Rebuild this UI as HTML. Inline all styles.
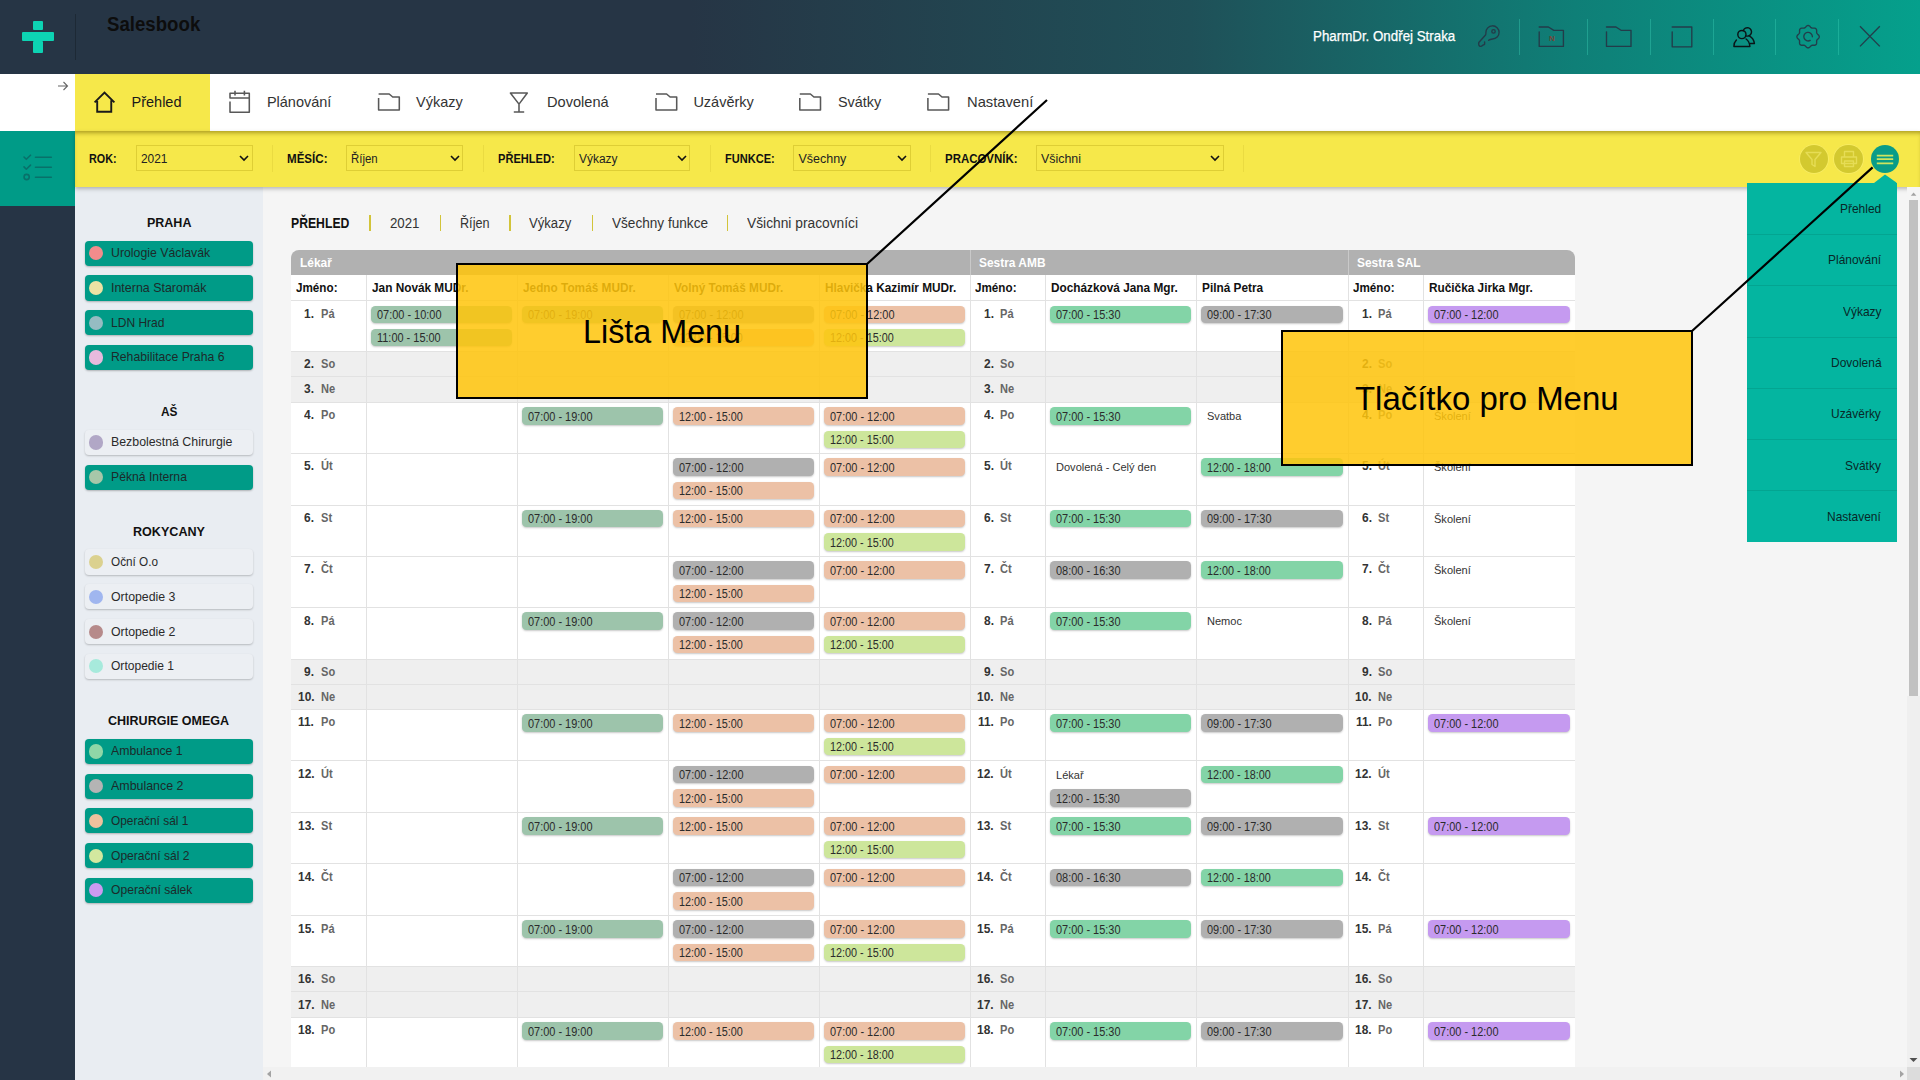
<!DOCTYPE html>
<html><head><meta charset="utf-8"><title>Salesbook</title>
<style>
html,body{margin:0;padding:0;}
body{width:1920px;height:1080px;overflow:hidden;position:relative;background:#f5f5f5;font-family:"Liberation Sans",sans-serif;}
div{box-sizing:border-box;}
svg{position:absolute;overflow:visible;}
</style></head><body>

<div style="position:absolute;left:262.5px;top:187px;width:1657.5px;height:893px;background:#f5f5f5;"></div>
<div style="position:absolute;left:0px;top:0px;width:1920px;height:74px;background:linear-gradient(90deg,#263545 0%,#263545 36%,#1f5058 62%,#0f7f77 82%,#05a08c 100%);"></div>
<div style="position:absolute;left:32.75px;top:20.6px;width:10px;height:9.4px;background:#0dd3b3;border-radius:1px;"></div>
<div style="position:absolute;left:21.9px;top:31.9px;width:31.85px;height:9.35px;background:#0dd3b3;border-radius:1px;"></div>
<div style="position:absolute;left:32.75px;top:41.0px;width:10px;height:11.5px;background:#0dd3b3;border-radius:1px;"></div>
<div style="position:absolute;left:75px;top:14px;width:1px;height:46px;background:rgba(0,0,0,0.22);"></div>
<div style="position:absolute;left:106.75px;top:14.37px;font-size:20px;line-height:20px;color:#0d0d0d;white-space:nowrap;font-weight:bold;transform:scaleX(0.9321);transform-origin:0 0;">Salesbook</div>
<div style="position:absolute;left:1313.00px;top:29.05px;font-size:14px;line-height:14px;color:#ffffff;white-space:nowrap;transform:scaleX(0.9522);transform-origin:0 0;-webkit-text-stroke:0.25px #fff;">PharmDr. Ondřej Straka</div>
<div style="position:absolute;left:1519px;top:19px;width:1.2px;height:36px;background:rgba(60,210,185,0.38);"></div>
<div style="position:absolute;left:1587px;top:19px;width:1.2px;height:36px;background:rgba(60,210,185,0.38);"></div>
<div style="position:absolute;left:1650px;top:19px;width:1.2px;height:36px;background:rgba(60,210,185,0.38);"></div>
<div style="position:absolute;left:1713px;top:19px;width:1.2px;height:36px;background:rgba(60,210,185,0.38);"></div>
<div style="position:absolute;left:1775px;top:19px;width:1.2px;height:36px;background:rgba(60,210,185,0.38);"></div>
<div style="position:absolute;left:1838px;top:19px;width:1.2px;height:36px;background:rgba(60,210,185,0.38);"></div>
<svg style="left:0;top:0" width="1920" height="74" viewBox="0 0 1920 74">
<g fill="none" stroke="#263545" stroke-width="1.35" stroke-linecap="round" stroke-linejoin="round" opacity="0.9">
<path d="M1488.6 40.3 Q1490 39.2 1492.5 39 A6.6 6.6 0 1 0 1485.9 32.6 Q1486 34.3 1485.5 35 L1478.8 42.5 Q1478.2 45.5 1480 46.3 Q1481.5 46.8 1482.5 45.3 L1484.6 44.3 L1484.6 42"/>
<circle cx="1493.5" cy="31.4" r="1.7"/>
<path d="M1539.2 31.8 L1539.2 46.4 L1563.4 46.4 L1563.4 30.3 L1553.8 30.3 L1548.4 27 L1539.2 27"/>
<path d="M1606.5 31.8 L1606.5 46.4 L1631 46.4 L1631 30.3 L1621 30.3 L1616 27 L1606.5 27"/>
<path d="M1672.2 31.8 L1672.2 46.8 L1691.8 46.8 L1691.8 27 L1672.2 27"/>
<path d="M1808.10 25.50 L1808.82 25.64 L1809.50 26.04 L1810.11 26.60 L1810.65 27.19 L1811.16 27.68 L1811.70 28.02 L1812.31 28.16 L1813.02 28.17 L1813.82 28.14 L1814.64 28.17 L1815.41 28.37 L1816.02 28.78 L1816.43 29.39 L1816.63 30.16 L1816.66 30.98 L1816.63 31.78 L1816.64 32.49 L1816.78 33.10 L1817.12 33.64 L1817.61 34.15 L1818.20 34.69 L1818.76 35.30 L1819.16 35.98 L1819.30 36.70 L1819.16 37.42 L1818.76 38.10 L1818.20 38.71 L1817.61 39.25 L1817.12 39.76 L1816.78 40.30 L1816.64 40.91 L1816.63 41.62 L1816.66 42.42 L1816.63 43.24 L1816.43 44.01 L1816.02 44.62 L1815.41 45.03 L1814.64 45.23 L1813.82 45.26 L1813.02 45.23 L1812.31 45.24 L1811.70 45.38 L1811.16 45.72 L1810.65 46.21 L1810.11 46.80 L1809.50 47.36 L1808.82 47.76 L1808.10 47.90 L1807.38 47.76 L1806.70 47.36 L1806.09 46.80 L1805.55 46.21 L1805.04 45.72 L1804.50 45.38 L1803.89 45.24 L1803.17 45.23 L1802.38 45.26 L1801.56 45.23 L1800.79 45.03 L1800.18 44.62 L1799.77 44.01 L1799.57 43.24 L1799.54 42.42 L1799.57 41.63 L1799.56 40.91 L1799.42 40.30 L1799.08 39.76 L1798.59 39.25 L1798.00 38.71 L1797.44 38.10 L1797.04 37.42 L1796.90 36.70 L1797.04 35.98 L1797.44 35.30 L1798.00 34.69 L1798.59 34.15 L1799.08 33.64 L1799.42 33.10 L1799.56 32.49 L1799.57 31.78 L1799.54 30.98 L1799.57 30.16 L1799.77 29.39 L1800.18 28.78 L1800.79 28.37 L1801.56 28.17 L1802.38 28.14 L1803.17 28.17 L1803.89 28.16 L1804.50 28.02 L1805.04 27.68 L1805.55 27.19 L1806.09 26.60 L1806.70 26.04 L1807.38 25.64 L1808.10 25.50 Z"/>
<path d="M1812.4 36.7 A4.3 4.3 0 1 0 1810.2 40.4"/>
<path d="M1860 26.2 L1879.8 46.4 M1879.8 26.2 L1860 46.4" stroke-linecap="butt"/>
</g>
<text x="1551.8" y="41.1" font-family="Liberation Sans" font-size="8" font-weight="bold" fill="#8a3b2c" text-anchor="middle" opacity="0.85">N</text>
<g fill="none" stroke="#0a1518" stroke-width="1.45" stroke-linecap="round" stroke-linejoin="round">
<circle cx="1741.9" cy="34.5" r="4.1"/>
<path d="M1743.3 30.65 A4.2 4.2 0 1 1 1745.78 35.81"/>
<path d="M1736.4 40.1 Q1733.6 43 1733.9 46.5 L1749.9 46.5 C1749.6 43 1748.3 40.5 1746.1 39"/>
<path d="M1749.6 36.1 Q1753.8 38.5 1754.4 43.5 L1750.5 43.5"/>
</g></svg>
<div style="position:absolute;left:0px;top:74px;width:1920px;height:56.5px;background:#ffffff;"></div>
<div style="position:absolute;left:75px;top:74px;width:135px;height:56.5px;background:#f6e84a;"></div>
<svg style="left:57px;top:80px" width="12" height="12" viewBox="0 0 12 12">
<path d="M1 6 L10.5 6 M6.5 2 L10.5 6 L6.5 10" fill="none" stroke="#666" stroke-width="1.1"/></svg>
<svg style="left:0;top:74px" width="1100" height="57" viewBox="0 74 1100 57">
<path d="M94.6 102.4 L104.5 92.5 L114.4 102.4 M97.2 101 L97.2 111.8 L111.25 111.8 L111.25 100.3" fill="none" stroke="#1a1a1a" stroke-width="1.9" stroke-linejoin="miter" stroke-linecap="butt"/>
<g fill="none" stroke="#585858" stroke-width="1.55" stroke-linejoin="round">
<path d="M230 101.5 L230 112.3 L249.3 112.3 L249.3 93.2 L230 93.2 L230 98 L249.3 98 M235 90.8 L235 95.5 M244.4 90.8 L244.4 95.5"/>
<path d="M378.6 98 L378.6 110 L399.3 110 L399.3 97 L392.70000000000005 97 L389.20000000000005 94 L378.6 94"/>
<path d="M510.4 93 L527.3 93 L519 104.1 Z M519 104.1 L519 112 M513.8 112 L524.2 112"/>
<path d="M656 98 L656 110 L676.7 110 L676.7 97 L670.1 97 L666.6 94 L656 94"/>
<path d="M799.8 98 L799.8 110 L820.5 110 L820.5 97 L813.9 97 L810.4 94 L799.8 94"/>
<path d="M927.9 98 L927.9 110 L948.6 110 L948.6 97 L942.0 97 L938.5 94 L927.9 94"/>
</g></svg>
<div style="position:absolute;left:131.50px;top:95.23px;font-size:14.5px;line-height:14.5px;color:#1a1a1a;white-space:nowrap;">Přehled</div>
<div style="position:absolute;left:266.90px;top:95.23px;font-size:14.5px;line-height:14.5px;color:#333;white-space:nowrap;">Plánování</div>
<div style="position:absolute;left:416.00px;top:95.23px;font-size:14.5px;line-height:14.5px;color:#333;white-space:nowrap;">Výkazy</div>
<div style="position:absolute;left:547.00px;top:95.23px;font-size:14.5px;line-height:14.5px;color:#333;white-space:nowrap;transform:scaleX(1.0060);transform-origin:0 0;">Dovolená</div>
<div style="position:absolute;left:693.40px;top:95.23px;font-size:14.5px;line-height:14.5px;color:#333;white-space:nowrap;">Uzávěrky</div>
<div style="position:absolute;left:838.40px;top:95.23px;font-size:14.5px;line-height:14.5px;color:#333;white-space:nowrap;transform:scaleX(0.9931);transform-origin:0 0;">Svátky</div>
<div style="position:absolute;left:966.60px;top:95.23px;font-size:14.5px;line-height:14.5px;color:#333;white-space:nowrap;transform:scaleX(1.0165);transform-origin:0 0;">Nastavení</div>
<div style="position:absolute;left:0px;top:130.5px;width:75px;height:75.1px;background:#009b87;"></div>
<svg style="left:0;top:130px" width="75" height="76" viewBox="0 130 75 76">
<g fill="none" stroke="#08716a" stroke-width="1.6" stroke-linecap="round" stroke-linejoin="round">
<path d="M24 157 L26.3 159.3 L30.5 155.2 M24 166.9 L26.3 169.2 L30.5 165.1"/><circle cx="26.65" cy="177" r="2.6"/>
<path d="M35.5 157.3 L51.3 157.3 M35.5 167.2 L51.3 167.2 M35.5 177.2 L51.3 177.2"/></g></svg>
<div style="position:absolute;left:0px;top:205.6px;width:75px;height:874.4px;background:#263445;"></div>
<div style="position:absolute;left:75px;top:187px;width:187.5px;height:893px;background:#e9edf2;"></div>
<div style="position:absolute;left:75px;top:130.5px;width:1845px;height:56.5px;background:#f6e84a;box-shadow:0 2px 4px rgba(0,0,0,0.25), inset 0 4px 4px -2px rgba(110,95,0,0.55);"></div>
<div style="position:absolute;left:89.25px;top:153.02px;font-size:12.5px;line-height:12.5px;color:#111;white-space:nowrap;font-weight:bold;transform:scaleX(0.8611);transform-origin:0 0;">ROK:</div>
<div style="position:absolute;left:135.7px;top:145.3px;width:117px;height:25.3px;border:1px solid rgba(160,140,0,0.28);"></div>
<div style="position:absolute;left:140.70px;top:152.82px;font-size:12.5px;line-height:12.5px;color:#222;white-space:nowrap;transform:scaleX(0.9528);transform-origin:0 0;">2021</div>
<svg style="left:239.2px;top:155px" width="10" height="6" viewBox="0 0 10 6">
<path d="M1 1 L5 5 L9 1" fill="none" stroke="#111" stroke-width="1.6"/></svg>
<div style="position:absolute;left:272.2px;top:145px;width:1px;height:27px;background:rgba(150,130,0,0.12);"></div>
<div style="position:absolute;left:287.00px;top:153.02px;font-size:12.5px;line-height:12.5px;color:#111;white-space:nowrap;font-weight:bold;transform:scaleX(0.9257);transform-origin:0 0;">MĚSÍC:</div>
<div style="position:absolute;left:346.25px;top:145.3px;width:117px;height:25.3px;border:1px solid rgba(160,140,0,0.28);"></div>
<div style="position:absolute;left:351.25px;top:152.82px;font-size:12.5px;line-height:12.5px;color:#222;white-space:nowrap;transform:scaleX(0.9113);transform-origin:0 0;">Říjen</div>
<svg style="left:449.75px;top:155px" width="10" height="6" viewBox="0 0 10 6">
<path d="M1 1 L5 5 L9 1" fill="none" stroke="#111" stroke-width="1.6"/></svg>
<div style="position:absolute;left:483px;top:145px;width:1px;height:27px;background:rgba(150,130,0,0.12);"></div>
<div style="position:absolute;left:497.80px;top:153.02px;font-size:12.5px;line-height:12.5px;color:#111;white-space:nowrap;font-weight:bold;transform:scaleX(0.8861);transform-origin:0 0;">PŘEHLED:</div>
<div style="position:absolute;left:573.75px;top:145.3px;width:116.5px;height:25.3px;border:1px solid rgba(160,140,0,0.28);"></div>
<div style="position:absolute;left:578.75px;top:152.82px;font-size:12.5px;line-height:12.5px;color:#222;white-space:nowrap;transform:scaleX(0.9550);transform-origin:0 0;">Výkazy</div>
<svg style="left:676.75px;top:155px" width="10" height="6" viewBox="0 0 10 6">
<path d="M1 1 L5 5 L9 1" fill="none" stroke="#111" stroke-width="1.6"/></svg>
<div style="position:absolute;left:709.7px;top:145px;width:1px;height:27px;background:rgba(150,130,0,0.12);"></div>
<div style="position:absolute;left:724.70px;top:153.02px;font-size:12.5px;line-height:12.5px;color:#111;white-space:nowrap;font-weight:bold;transform:scaleX(0.8836);transform-origin:0 0;">FUNKCE:</div>
<div style="position:absolute;left:793.4px;top:145.3px;width:117.2px;height:25.3px;border:1px solid rgba(160,140,0,0.28);"></div>
<div style="position:absolute;left:798.40px;top:152.82px;font-size:12.5px;line-height:12.5px;color:#222;white-space:nowrap;">Všechny</div>
<svg style="left:897.1px;top:155px" width="10" height="6" viewBox="0 0 10 6">
<path d="M1 1 L5 5 L9 1" fill="none" stroke="#111" stroke-width="1.6"/></svg>
<div style="position:absolute;left:930px;top:145px;width:1px;height:27px;background:rgba(150,130,0,0.12);"></div>
<div style="position:absolute;left:944.70px;top:153.02px;font-size:12.5px;line-height:12.5px;color:#111;white-space:nowrap;font-weight:bold;transform:scaleX(0.9155);transform-origin:0 0;">PRACOVNÍK:</div>
<div style="position:absolute;left:1036.25px;top:145.3px;width:187.3px;height:25.3px;border:1px solid rgba(160,140,0,0.28);"></div>
<div style="position:absolute;left:1041.25px;top:152.82px;font-size:12.5px;line-height:12.5px;color:#222;white-space:nowrap;transform:scaleX(0.9922);transform-origin:0 0;">Všichni</div>
<svg style="left:1210.05px;top:155px" width="10" height="6" viewBox="0 0 10 6">
<path d="M1 1 L5 5 L9 1" fill="none" stroke="#111" stroke-width="1.6"/></svg>
<div style="position:absolute;left:1242.7px;top:145px;width:1px;height:27px;background:rgba(150,130,0,0.12);"></div>
<div style="position:absolute;left:1799.5px;top:145px;width:28.2px;height:28.2px;border-radius:50%;background:#d3c92f;box-shadow:0 0 0 0.8px rgba(250,240,120,0.6);"></div>
<svg style="left:1804px;top:150px" width="19" height="19" viewBox="0 0 19 19">
<path d="M2 2.5 L17 2.5 L11 9.5 L11 16.5 L8 14.5 L8 9.5 Z" fill="none" stroke="#e6dd55" stroke-width="1.4" stroke-linejoin="round"/></svg>
<div style="position:absolute;left:1834.4px;top:145px;width:28.2px;height:28.2px;border-radius:50%;background:#d3c92f;box-shadow:0 0 0 0.8px rgba(250,240,120,0.6);"></div>
<svg style="left:1838.5px;top:149px" width="20" height="20" viewBox="0 0 20 20">
<g fill="none" stroke="#e6dd55" stroke-width="1.4" stroke-linejoin="round">
<path d="M5.5 8 L5.5 2.5 L14.5 2.5 L14.5 8 M2.5 8 L17.5 8 L17.5 14.5 L2.5 14.5 Z M5.5 12 L14.5 12 L14.5 17.5 L5.5 17.5 Z"/></g></svg>
<div style="position:absolute;left:1870.5px;top:145px;width:28.2px;height:28.2px;border-radius:50%;background:#099c88;"></div>
<svg style="left:1876px;top:153px" width="18" height="12" viewBox="0 0 18 12">
<path d="M0.8 2.7 L17.2 2.7 M0.8 6.2 L17.2 6.2 M0.8 10.3 L17.2 10.3" fill="none" stroke="#cfe45e" stroke-width="1.7"/></svg>
<div style="position:absolute;left:146.55px;top:216.30px;font-size:13px;line-height:13px;color:#111;white-space:nowrap;font-weight:bold;transform:scaleX(0.9607);transform-origin:0 0;">PRAHA</div>
<div style="position:absolute;left:85px;top:240.7px;width:168.3px;height:25.3px;background:#009b87;border-radius:4px;box-shadow:0 1px 2px rgba(0,0,0,0.25);"></div>
<div style="position:absolute;left:89px;top:246.29999999999998px;width:14.2px;height:14.2px;background:#f28c8c;border-radius:50%;"></div>
<div style="position:absolute;left:110.50px;top:247.33px;font-size:12.6px;line-height:12.6px;color:#1c2a2a;white-space:nowrap;transform:scaleX(0.9772);transform-origin:0 0;">Urologie Václavák</div>
<div style="position:absolute;left:85px;top:275.4px;width:168.3px;height:25.3px;background:#009b87;border-radius:4px;box-shadow:0 1px 2px rgba(0,0,0,0.25);"></div>
<div style="position:absolute;left:89px;top:281.0px;width:14.2px;height:14.2px;background:#ede2a4;border-radius:50%;"></div>
<div style="position:absolute;left:110.50px;top:282.03px;font-size:12.6px;line-height:12.6px;color:#1c2a2a;white-space:nowrap;transform:scaleX(0.9875);transform-origin:0 0;">Interna Staromák</div>
<div style="position:absolute;left:85px;top:310.1px;width:168.3px;height:25.3px;background:#009b87;border-radius:4px;box-shadow:0 1px 2px rgba(0,0,0,0.25);"></div>
<div style="position:absolute;left:89px;top:315.70000000000005px;width:14.2px;height:14.2px;background:#95bcc2;border-radius:50%;"></div>
<div style="position:absolute;left:110.50px;top:316.73px;font-size:12.6px;line-height:12.6px;color:#1c2a2a;white-space:nowrap;transform:scaleX(0.9552);transform-origin:0 0;">LDN Hrad</div>
<div style="position:absolute;left:85px;top:344.8px;width:168.3px;height:25.3px;background:#009b87;border-radius:4px;box-shadow:0 1px 2px rgba(0,0,0,0.25);"></div>
<div style="position:absolute;left:89px;top:350.40000000000003px;width:14.2px;height:14.2px;background:#e7badd;border-radius:50%;"></div>
<div style="position:absolute;left:110.50px;top:351.43px;font-size:12.6px;line-height:12.6px;color:#1c2a2a;white-space:nowrap;transform:scaleX(0.9702);transform-origin:0 0;">Rehabilitace Praha 6</div>
<div style="position:absolute;left:160.50px;top:404.80px;font-size:13px;line-height:13px;color:#111;white-space:nowrap;font-weight:bold;transform:scaleX(0.9131);transform-origin:0 0;">AŠ</div>
<div style="position:absolute;left:85px;top:429.8px;width:168.3px;height:25.3px;background:#eceff3;border-radius:4px;box-shadow:0 1px 2px rgba(0,0,0,0.22);"></div>
<div style="position:absolute;left:89px;top:435.40000000000003px;width:14.2px;height:14.2px;background:#b1a7c6;border-radius:50%;"></div>
<div style="position:absolute;left:110.50px;top:436.43px;font-size:12.6px;line-height:12.6px;color:#2a2a2a;white-space:nowrap;transform:scaleX(0.9800);transform-origin:0 0;">Bezbolestná Chirurgie</div>
<div style="position:absolute;left:85px;top:464.6px;width:168.3px;height:25.3px;background:#009b87;border-radius:4px;box-shadow:0 1px 2px rgba(0,0,0,0.25);"></div>
<div style="position:absolute;left:89px;top:470.20000000000005px;width:14.2px;height:14.2px;background:#a7c7a9;border-radius:50%;"></div>
<div style="position:absolute;left:110.50px;top:471.23px;font-size:12.6px;line-height:12.6px;color:#1c2a2a;white-space:nowrap;transform:scaleX(0.9682);transform-origin:0 0;">Pěkná Interna</div>
<div style="position:absolute;left:132.75px;top:524.80px;font-size:13px;line-height:13px;color:#111;white-space:nowrap;font-weight:bold;transform:scaleX(0.9674);transform-origin:0 0;">ROKYCANY</div>
<div style="position:absolute;left:85px;top:549.4px;width:168.3px;height:25.3px;background:#eceff3;border-radius:4px;box-shadow:0 1px 2px rgba(0,0,0,0.22);"></div>
<div style="position:absolute;left:89px;top:555.0px;width:14.2px;height:14.2px;background:#dbd18f;border-radius:50%;"></div>
<div style="position:absolute;left:110.50px;top:556.03px;font-size:12.6px;line-height:12.6px;color:#2a2a2a;white-space:nowrap;transform:scaleX(0.9325);transform-origin:0 0;">Oční O.o</div>
<div style="position:absolute;left:85px;top:584.2px;width:168.3px;height:25.3px;background:#eceff3;border-radius:4px;box-shadow:0 1px 2px rgba(0,0,0,0.22);"></div>
<div style="position:absolute;left:89px;top:589.8000000000001px;width:14.2px;height:14.2px;background:#a0b6ef;border-radius:50%;"></div>
<div style="position:absolute;left:110.50px;top:590.83px;font-size:12.6px;line-height:12.6px;color:#2a2a2a;white-space:nowrap;transform:scaleX(0.9797);transform-origin:0 0;">Ortopedie 3</div>
<div style="position:absolute;left:85px;top:618.9px;width:168.3px;height:25.3px;background:#eceff3;border-radius:4px;box-shadow:0 1px 2px rgba(0,0,0,0.22);"></div>
<div style="position:absolute;left:89px;top:624.5px;width:14.2px;height:14.2px;background:#b68a8a;border-radius:50%;"></div>
<div style="position:absolute;left:110.50px;top:625.53px;font-size:12.6px;line-height:12.6px;color:#2a2a2a;white-space:nowrap;transform:scaleX(0.9797);transform-origin:0 0;">Ortopedie 2</div>
<div style="position:absolute;left:85px;top:653.6px;width:168.3px;height:25.3px;background:#eceff3;border-radius:4px;box-shadow:0 1px 2px rgba(0,0,0,0.22);"></div>
<div style="position:absolute;left:89px;top:659.2px;width:14.2px;height:14.2px;background:#a7eadc;border-radius:50%;"></div>
<div style="position:absolute;left:110.50px;top:660.23px;font-size:12.6px;line-height:12.6px;color:#2a2a2a;white-space:nowrap;transform:scaleX(0.9569);transform-origin:0 0;">Ortopedie 1</div>
<div style="position:absolute;left:108.25px;top:714.30px;font-size:13px;line-height:13px;color:#111;white-space:nowrap;font-weight:bold;transform:scaleX(0.9630);transform-origin:0 0;">CHIRURGIE OMEGA</div>
<div style="position:absolute;left:85px;top:738.8px;width:168.3px;height:25.3px;background:#009b87;border-radius:4px;box-shadow:0 1px 2px rgba(0,0,0,0.25);"></div>
<div style="position:absolute;left:89px;top:744.4px;width:14.2px;height:14.2px;background:#8fd7a7;border-radius:50%;"></div>
<div style="position:absolute;left:110.50px;top:745.43px;font-size:12.6px;line-height:12.6px;color:#1c2a2a;white-space:nowrap;transform:scaleX(0.9752);transform-origin:0 0;">Ambulance 1</div>
<div style="position:absolute;left:85px;top:773.5px;width:168.3px;height:25.3px;background:#009b87;border-radius:4px;box-shadow:0 1px 2px rgba(0,0,0,0.25);"></div>
<div style="position:absolute;left:89px;top:779.1px;width:14.2px;height:14.2px;background:#b4b4b4;border-radius:50%;"></div>
<div style="position:absolute;left:110.50px;top:780.13px;font-size:12.6px;line-height:12.6px;color:#1c2a2a;white-space:nowrap;transform:scaleX(0.9861);transform-origin:0 0;">Ambulance 2</div>
<div style="position:absolute;left:85px;top:808.2px;width:168.3px;height:25.3px;background:#009b87;border-radius:4px;box-shadow:0 1px 2px rgba(0,0,0,0.25);"></div>
<div style="position:absolute;left:89px;top:813.8000000000001px;width:14.2px;height:14.2px;background:#efc19d;border-radius:50%;"></div>
<div style="position:absolute;left:110.50px;top:814.83px;font-size:12.6px;line-height:12.6px;color:#1c2a2a;white-space:nowrap;transform:scaleX(0.9443);transform-origin:0 0;">Operační sál 1</div>
<div style="position:absolute;left:85px;top:842.9px;width:168.3px;height:25.3px;background:#009b87;border-radius:4px;box-shadow:0 1px 2px rgba(0,0,0,0.25);"></div>
<div style="position:absolute;left:89px;top:848.5px;width:14.2px;height:14.2px;background:#d3e89f;border-radius:50%;"></div>
<div style="position:absolute;left:110.50px;top:849.53px;font-size:12.6px;line-height:12.6px;color:#1c2a2a;white-space:nowrap;transform:scaleX(0.9590);transform-origin:0 0;">Operační sál 2</div>
<div style="position:absolute;left:85px;top:877.6px;width:168.3px;height:25.3px;background:#009b87;border-radius:4px;box-shadow:0 1px 2px rgba(0,0,0,0.25);"></div>
<div style="position:absolute;left:89px;top:883.2px;width:14.2px;height:14.2px;background:#cb9af0;border-radius:50%;"></div>
<div style="position:absolute;left:110.50px;top:884.23px;font-size:12.6px;line-height:12.6px;color:#1c2a2a;white-space:nowrap;transform:scaleX(0.9611);transform-origin:0 0;">Operační sálek</div>
<div style="position:absolute;left:290.60px;top:215.65px;font-size:14px;line-height:14px;color:#111;white-space:nowrap;font-weight:bold;transform:scaleX(0.8727);transform-origin:0 0;">PŘEHLED</div>
<div style="position:absolute;left:369.4px;top:214.6px;width:1.6px;height:16px;background:#d2c43a;"></div>
<div style="position:absolute;left:439.8px;top:214.6px;width:1.6px;height:16px;background:#d2c43a;"></div>
<div style="position:absolute;left:509.0px;top:214.6px;width:1.6px;height:16px;background:#d2c43a;"></div>
<div style="position:absolute;left:591.5px;top:214.6px;width:1.6px;height:16px;background:#d2c43a;"></div>
<div style="position:absolute;left:726.7px;top:214.6px;width:1.6px;height:16px;background:#d2c43a;"></div>
<div style="position:absolute;left:389.70px;top:215.65px;font-size:14px;line-height:14px;color:#333;white-space:nowrap;transform:scaleX(0.9470);transform-origin:0 0;">2021</div>
<div style="position:absolute;left:459.60px;top:215.65px;font-size:14px;line-height:14px;color:#333;white-space:nowrap;transform:scaleX(0.9024);transform-origin:0 0;">Říjen</div>
<div style="position:absolute;left:529.30px;top:215.65px;font-size:14px;line-height:14px;color:#333;white-space:nowrap;transform:scaleX(0.9369);transform-origin:0 0;">Výkazy</div>
<div style="position:absolute;left:611.60px;top:215.65px;font-size:14px;line-height:14px;color:#333;white-space:nowrap;transform:scaleX(0.9713);transform-origin:0 0;">Všechny funkce</div>
<div style="position:absolute;left:747.00px;top:215.65px;font-size:14px;line-height:14px;color:#333;white-space:nowrap;transform:scaleX(0.9837);transform-origin:0 0;">Všichni pracovníci</div>
<div style="position:absolute;left:291.0px;top:274.8px;width:1283.5px;height:792.2px;background:#ffffff;"></div>
<div style="position:absolute;left:291.0px;top:351.6px;width:1283.5px;height:25.299999999999955px;background:#efefef;"></div>
<div style="position:absolute;left:291.0px;top:376.9px;width:1283.5px;height:26.0px;background:#efefef;"></div>
<div style="position:absolute;left:291.0px;top:659.6px;width:1283.5px;height:25.299999999999955px;background:#efefef;"></div>
<div style="position:absolute;left:291.0px;top:684.9px;width:1283.5px;height:25.0px;background:#efefef;"></div>
<div style="position:absolute;left:291.0px;top:966.6px;width:1283.5px;height:25.799999999999955px;background:#efefef;"></div>
<div style="position:absolute;left:291.0px;top:992.4px;width:1283.5px;height:25.5px;background:#efefef;"></div>
<div style="position:absolute;left:291.0px;top:250.0px;width:1283.5px;height:24.80000000000001px;background:#b1b1b1;border-radius:8px 8px 0 0;"></div>
<div style="position:absolute;left:300.30px;top:256.59px;font-size:12.3px;line-height:12.3px;color:#ffffff;white-space:nowrap;font-weight:bold;transform:scaleX(0.9700);transform-origin:0 0;">Lékař</div>
<div style="position:absolute;left:979.30px;top:256.59px;font-size:12.3px;line-height:12.3px;color:#ffffff;white-space:nowrap;font-weight:bold;transform:scaleX(0.9700);transform-origin:0 0;">Sestra AMB</div>
<div style="position:absolute;left:970.0px;top:250.0px;width:1px;height:24.80000000000001px;background:#c9c9c9;"></div>
<div style="position:absolute;left:1357.30px;top:256.59px;font-size:12.3px;line-height:12.3px;color:#ffffff;white-space:nowrap;font-weight:bold;transform:scaleX(0.9700);transform-origin:0 0;">Sestra SAL</div>
<div style="position:absolute;left:1348.0px;top:250.0px;width:1px;height:24.80000000000001px;background:#c9c9c9;"></div>
<div style="position:absolute;left:291.0px;top:300.1px;width:1283.5px;height:1px;background:#e2e2e2;"></div>
<div style="position:absolute;left:291.0px;top:350.6px;width:1283.5px;height:1px;background:#e2e2e2;"></div>
<div style="position:absolute;left:291.0px;top:375.9px;width:1283.5px;height:1px;background:#e2e2e2;"></div>
<div style="position:absolute;left:291.0px;top:401.9px;width:1283.5px;height:1px;background:#e2e2e2;"></div>
<div style="position:absolute;left:291.0px;top:452.8px;width:1283.5px;height:1px;background:#e2e2e2;"></div>
<div style="position:absolute;left:291.0px;top:504.5px;width:1283.5px;height:1px;background:#e2e2e2;"></div>
<div style="position:absolute;left:291.0px;top:555.7px;width:1283.5px;height:1px;background:#e2e2e2;"></div>
<div style="position:absolute;left:291.0px;top:607.0px;width:1283.5px;height:1px;background:#e2e2e2;"></div>
<div style="position:absolute;left:291.0px;top:658.6px;width:1283.5px;height:1px;background:#e2e2e2;"></div>
<div style="position:absolute;left:291.0px;top:683.9px;width:1283.5px;height:1px;background:#e2e2e2;"></div>
<div style="position:absolute;left:291.0px;top:708.9px;width:1283.5px;height:1px;background:#e2e2e2;"></div>
<div style="position:absolute;left:291.0px;top:760.3px;width:1283.5px;height:1px;background:#e2e2e2;"></div>
<div style="position:absolute;left:291.0px;top:812.0px;width:1283.5px;height:1px;background:#e2e2e2;"></div>
<div style="position:absolute;left:291.0px;top:863.2px;width:1283.5px;height:1px;background:#e2e2e2;"></div>
<div style="position:absolute;left:291.0px;top:915.0px;width:1283.5px;height:1px;background:#e2e2e2;"></div>
<div style="position:absolute;left:291.0px;top:965.6px;width:1283.5px;height:1px;background:#e2e2e2;"></div>
<div style="position:absolute;left:291.0px;top:991.4px;width:1283.5px;height:1px;background:#e2e2e2;"></div>
<div style="position:absolute;left:291.0px;top:1016.9px;width:1283.5px;height:1px;background:#e2e2e2;"></div>
<div style="position:absolute;left:366px;top:274.8px;width:1px;height:792.2px;background:#e2e2e2;"></div>
<div style="position:absolute;left:517px;top:274.8px;width:1px;height:792.2px;background:#e2e2e2;"></div>
<div style="position:absolute;left:668px;top:274.8px;width:1px;height:792.2px;background:#e2e2e2;"></div>
<div style="position:absolute;left:819px;top:274.8px;width:1px;height:792.2px;background:#e2e2e2;"></div>
<div style="position:absolute;left:970px;top:274.8px;width:1px;height:792.2px;background:#e2e2e2;"></div>
<div style="position:absolute;left:1045px;top:274.8px;width:1px;height:792.2px;background:#e2e2e2;"></div>
<div style="position:absolute;left:1196px;top:274.8px;width:1px;height:792.2px;background:#e2e2e2;"></div>
<div style="position:absolute;left:1348px;top:274.8px;width:1px;height:792.2px;background:#e2e2e2;"></div>
<div style="position:absolute;left:1423px;top:274.8px;width:1px;height:792.2px;background:#e2e2e2;"></div>
<div style="position:absolute;left:295.60px;top:282.22px;font-size:12.5px;line-height:12.5px;color:#111;white-space:nowrap;font-weight:bold;transform:scaleX(0.9339);transform-origin:0 0;">Jméno:</div>
<div style="position:absolute;left:371.70px;top:282.22px;font-size:12.5px;line-height:12.5px;color:#111;white-space:nowrap;font-weight:bold;transform:scaleX(0.9450);transform-origin:0 0;">Jan Novák MUDr.</div>
<div style="position:absolute;left:522.70px;top:282.22px;font-size:12.5px;line-height:12.5px;color:#111;white-space:nowrap;font-weight:bold;transform:scaleX(0.9450);transform-origin:0 0;">Jedno Tomáš MUDr.</div>
<div style="position:absolute;left:673.70px;top:282.22px;font-size:12.5px;line-height:12.5px;color:#111;white-space:nowrap;font-weight:bold;transform:scaleX(0.9450);transform-origin:0 0;">Volný Tomáš MUDr.</div>
<div style="position:absolute;left:824.70px;top:282.22px;font-size:12.5px;line-height:12.5px;color:#111;white-space:nowrap;font-weight:bold;transform:scaleX(0.9450);transform-origin:0 0;">Hlavička Kazimír MUDr.</div>
<div style="position:absolute;left:975.10px;top:282.22px;font-size:12.5px;line-height:12.5px;color:#111;white-space:nowrap;font-weight:bold;transform:scaleX(0.9339);transform-origin:0 0;">Jméno:</div>
<div style="position:absolute;left:1050.70px;top:282.22px;font-size:12.5px;line-height:12.5px;color:#111;white-space:nowrap;font-weight:bold;transform:scaleX(0.9450);transform-origin:0 0;">Docházková Jana Mgr.</div>
<div style="position:absolute;left:1201.70px;top:282.22px;font-size:12.5px;line-height:12.5px;color:#111;white-space:nowrap;font-weight:bold;transform:scaleX(0.9450);transform-origin:0 0;">Pilná Petra</div>
<div style="position:absolute;left:1353.10px;top:282.22px;font-size:12.5px;line-height:12.5px;color:#111;white-space:nowrap;font-weight:bold;transform:scaleX(0.9339);transform-origin:0 0;">Jméno:</div>
<div style="position:absolute;left:1428.70px;top:282.22px;font-size:12.5px;line-height:12.5px;color:#111;white-space:nowrap;font-weight:bold;transform:scaleX(0.9450);transform-origin:0 0;">Ručička Jirka Mgr.</div>
<div style="position:absolute;left:304.14px;top:307.69px;font-size:12.3px;line-height:12.3px;color:#333;white-space:nowrap;font-weight:bold;transform:scaleX(0.9700);transform-origin:0 0;">1.</div>
<div style="position:absolute;left:320.70px;top:307.69px;font-size:12.3px;line-height:12.3px;color:#666;white-space:nowrap;font-weight:bold;transform:scaleX(0.9000);transform-origin:0 0;font-weight:600;">Pá</div>
<div style="position:absolute;left:304.14px;top:358.19px;font-size:12.3px;line-height:12.3px;color:#333;white-space:nowrap;font-weight:bold;transform:scaleX(0.9700);transform-origin:0 0;">2.</div>
<div style="position:absolute;left:320.70px;top:358.19px;font-size:12.3px;line-height:12.3px;color:#666;white-space:nowrap;font-weight:bold;transform:scaleX(0.9000);transform-origin:0 0;font-weight:600;">So</div>
<div style="position:absolute;left:304.14px;top:383.49px;font-size:12.3px;line-height:12.3px;color:#333;white-space:nowrap;font-weight:bold;transform:scaleX(0.9700);transform-origin:0 0;">3.</div>
<div style="position:absolute;left:320.70px;top:383.49px;font-size:12.3px;line-height:12.3px;color:#666;white-space:nowrap;font-weight:bold;transform:scaleX(0.9000);transform-origin:0 0;font-weight:600;">Ne</div>
<div style="position:absolute;left:304.14px;top:409.49px;font-size:12.3px;line-height:12.3px;color:#333;white-space:nowrap;font-weight:bold;transform:scaleX(0.9700);transform-origin:0 0;">4.</div>
<div style="position:absolute;left:320.70px;top:409.49px;font-size:12.3px;line-height:12.3px;color:#666;white-space:nowrap;font-weight:bold;transform:scaleX(0.9000);transform-origin:0 0;font-weight:600;">Po</div>
<div style="position:absolute;left:304.14px;top:460.39px;font-size:12.3px;line-height:12.3px;color:#333;white-space:nowrap;font-weight:bold;transform:scaleX(0.9700);transform-origin:0 0;">5.</div>
<div style="position:absolute;left:320.70px;top:460.39px;font-size:12.3px;line-height:12.3px;color:#666;white-space:nowrap;font-weight:bold;transform:scaleX(0.9000);transform-origin:0 0;font-weight:600;">Út</div>
<div style="position:absolute;left:304.14px;top:512.09px;font-size:12.3px;line-height:12.3px;color:#333;white-space:nowrap;font-weight:bold;transform:scaleX(0.9700);transform-origin:0 0;">6.</div>
<div style="position:absolute;left:320.70px;top:512.09px;font-size:12.3px;line-height:12.3px;color:#666;white-space:nowrap;font-weight:bold;transform:scaleX(0.9000);transform-origin:0 0;font-weight:600;">St</div>
<div style="position:absolute;left:304.14px;top:563.29px;font-size:12.3px;line-height:12.3px;color:#333;white-space:nowrap;font-weight:bold;transform:scaleX(0.9700);transform-origin:0 0;">7.</div>
<div style="position:absolute;left:320.70px;top:563.29px;font-size:12.3px;line-height:12.3px;color:#666;white-space:nowrap;font-weight:bold;transform:scaleX(0.9000);transform-origin:0 0;font-weight:600;">Čt</div>
<div style="position:absolute;left:304.14px;top:614.59px;font-size:12.3px;line-height:12.3px;color:#333;white-space:nowrap;font-weight:bold;transform:scaleX(0.9700);transform-origin:0 0;">8.</div>
<div style="position:absolute;left:320.70px;top:614.59px;font-size:12.3px;line-height:12.3px;color:#666;white-space:nowrap;font-weight:bold;transform:scaleX(0.9000);transform-origin:0 0;font-weight:600;">Pá</div>
<div style="position:absolute;left:304.14px;top:666.19px;font-size:12.3px;line-height:12.3px;color:#333;white-space:nowrap;font-weight:bold;transform:scaleX(0.9700);transform-origin:0 0;">9.</div>
<div style="position:absolute;left:320.70px;top:666.19px;font-size:12.3px;line-height:12.3px;color:#666;white-space:nowrap;font-weight:bold;transform:scaleX(0.9000);transform-origin:0 0;font-weight:600;">So</div>
<div style="position:absolute;left:297.52px;top:691.49px;font-size:12.3px;line-height:12.3px;color:#333;white-space:nowrap;font-weight:bold;transform:scaleX(0.9700);transform-origin:0 0;">10.</div>
<div style="position:absolute;left:320.70px;top:691.49px;font-size:12.3px;line-height:12.3px;color:#666;white-space:nowrap;font-weight:bold;transform:scaleX(0.9000);transform-origin:0 0;font-weight:600;">Ne</div>
<div style="position:absolute;left:298.17px;top:716.49px;font-size:12.3px;line-height:12.3px;color:#333;white-space:nowrap;font-weight:bold;transform:scaleX(0.9700);transform-origin:0 0;">11.</div>
<div style="position:absolute;left:320.70px;top:716.49px;font-size:12.3px;line-height:12.3px;color:#666;white-space:nowrap;font-weight:bold;transform:scaleX(0.9000);transform-origin:0 0;font-weight:600;">Po</div>
<div style="position:absolute;left:297.52px;top:767.89px;font-size:12.3px;line-height:12.3px;color:#333;white-space:nowrap;font-weight:bold;transform:scaleX(0.9700);transform-origin:0 0;">12.</div>
<div style="position:absolute;left:320.70px;top:767.89px;font-size:12.3px;line-height:12.3px;color:#666;white-space:nowrap;font-weight:bold;transform:scaleX(0.9000);transform-origin:0 0;font-weight:600;">Út</div>
<div style="position:absolute;left:297.52px;top:819.59px;font-size:12.3px;line-height:12.3px;color:#333;white-space:nowrap;font-weight:bold;transform:scaleX(0.9700);transform-origin:0 0;">13.</div>
<div style="position:absolute;left:320.70px;top:819.59px;font-size:12.3px;line-height:12.3px;color:#666;white-space:nowrap;font-weight:bold;transform:scaleX(0.9000);transform-origin:0 0;font-weight:600;">St</div>
<div style="position:absolute;left:297.52px;top:870.79px;font-size:12.3px;line-height:12.3px;color:#333;white-space:nowrap;font-weight:bold;transform:scaleX(0.9700);transform-origin:0 0;">14.</div>
<div style="position:absolute;left:320.70px;top:870.79px;font-size:12.3px;line-height:12.3px;color:#666;white-space:nowrap;font-weight:bold;transform:scaleX(0.9000);transform-origin:0 0;font-weight:600;">Čt</div>
<div style="position:absolute;left:297.52px;top:922.59px;font-size:12.3px;line-height:12.3px;color:#333;white-space:nowrap;font-weight:bold;transform:scaleX(0.9700);transform-origin:0 0;">15.</div>
<div style="position:absolute;left:320.70px;top:922.59px;font-size:12.3px;line-height:12.3px;color:#666;white-space:nowrap;font-weight:bold;transform:scaleX(0.9000);transform-origin:0 0;font-weight:600;">Pá</div>
<div style="position:absolute;left:297.52px;top:973.19px;font-size:12.3px;line-height:12.3px;color:#333;white-space:nowrap;font-weight:bold;transform:scaleX(0.9700);transform-origin:0 0;">16.</div>
<div style="position:absolute;left:320.70px;top:973.19px;font-size:12.3px;line-height:12.3px;color:#666;white-space:nowrap;font-weight:bold;transform:scaleX(0.9000);transform-origin:0 0;font-weight:600;">So</div>
<div style="position:absolute;left:297.52px;top:998.99px;font-size:12.3px;line-height:12.3px;color:#333;white-space:nowrap;font-weight:bold;transform:scaleX(0.9700);transform-origin:0 0;">17.</div>
<div style="position:absolute;left:320.70px;top:998.99px;font-size:12.3px;line-height:12.3px;color:#666;white-space:nowrap;font-weight:bold;transform:scaleX(0.9000);transform-origin:0 0;font-weight:600;">Ne</div>
<div style="position:absolute;left:297.52px;top:1024.49px;font-size:12.3px;line-height:12.3px;color:#333;white-space:nowrap;font-weight:bold;transform:scaleX(0.9700);transform-origin:0 0;">18.</div>
<div style="position:absolute;left:320.70px;top:1024.49px;font-size:12.3px;line-height:12.3px;color:#666;white-space:nowrap;font-weight:bold;transform:scaleX(0.9000);transform-origin:0 0;font-weight:600;">Po</div>
<div style="position:absolute;left:983.64px;top:307.69px;font-size:12.3px;line-height:12.3px;color:#333;white-space:nowrap;font-weight:bold;transform:scaleX(0.9700);transform-origin:0 0;">1.</div>
<div style="position:absolute;left:1000.20px;top:307.69px;font-size:12.3px;line-height:12.3px;color:#666;white-space:nowrap;font-weight:bold;transform:scaleX(0.9000);transform-origin:0 0;font-weight:600;">Pá</div>
<div style="position:absolute;left:983.64px;top:358.19px;font-size:12.3px;line-height:12.3px;color:#333;white-space:nowrap;font-weight:bold;transform:scaleX(0.9700);transform-origin:0 0;">2.</div>
<div style="position:absolute;left:1000.20px;top:358.19px;font-size:12.3px;line-height:12.3px;color:#666;white-space:nowrap;font-weight:bold;transform:scaleX(0.9000);transform-origin:0 0;font-weight:600;">So</div>
<div style="position:absolute;left:983.64px;top:383.49px;font-size:12.3px;line-height:12.3px;color:#333;white-space:nowrap;font-weight:bold;transform:scaleX(0.9700);transform-origin:0 0;">3.</div>
<div style="position:absolute;left:1000.20px;top:383.49px;font-size:12.3px;line-height:12.3px;color:#666;white-space:nowrap;font-weight:bold;transform:scaleX(0.9000);transform-origin:0 0;font-weight:600;">Ne</div>
<div style="position:absolute;left:983.64px;top:409.49px;font-size:12.3px;line-height:12.3px;color:#333;white-space:nowrap;font-weight:bold;transform:scaleX(0.9700);transform-origin:0 0;">4.</div>
<div style="position:absolute;left:1000.20px;top:409.49px;font-size:12.3px;line-height:12.3px;color:#666;white-space:nowrap;font-weight:bold;transform:scaleX(0.9000);transform-origin:0 0;font-weight:600;">Po</div>
<div style="position:absolute;left:983.64px;top:460.39px;font-size:12.3px;line-height:12.3px;color:#333;white-space:nowrap;font-weight:bold;transform:scaleX(0.9700);transform-origin:0 0;">5.</div>
<div style="position:absolute;left:1000.20px;top:460.39px;font-size:12.3px;line-height:12.3px;color:#666;white-space:nowrap;font-weight:bold;transform:scaleX(0.9000);transform-origin:0 0;font-weight:600;">Út</div>
<div style="position:absolute;left:983.64px;top:512.09px;font-size:12.3px;line-height:12.3px;color:#333;white-space:nowrap;font-weight:bold;transform:scaleX(0.9700);transform-origin:0 0;">6.</div>
<div style="position:absolute;left:1000.20px;top:512.09px;font-size:12.3px;line-height:12.3px;color:#666;white-space:nowrap;font-weight:bold;transform:scaleX(0.9000);transform-origin:0 0;font-weight:600;">St</div>
<div style="position:absolute;left:983.64px;top:563.29px;font-size:12.3px;line-height:12.3px;color:#333;white-space:nowrap;font-weight:bold;transform:scaleX(0.9700);transform-origin:0 0;">7.</div>
<div style="position:absolute;left:1000.20px;top:563.29px;font-size:12.3px;line-height:12.3px;color:#666;white-space:nowrap;font-weight:bold;transform:scaleX(0.9000);transform-origin:0 0;font-weight:600;">Čt</div>
<div style="position:absolute;left:983.64px;top:614.59px;font-size:12.3px;line-height:12.3px;color:#333;white-space:nowrap;font-weight:bold;transform:scaleX(0.9700);transform-origin:0 0;">8.</div>
<div style="position:absolute;left:1000.20px;top:614.59px;font-size:12.3px;line-height:12.3px;color:#666;white-space:nowrap;font-weight:bold;transform:scaleX(0.9000);transform-origin:0 0;font-weight:600;">Pá</div>
<div style="position:absolute;left:983.64px;top:666.19px;font-size:12.3px;line-height:12.3px;color:#333;white-space:nowrap;font-weight:bold;transform:scaleX(0.9700);transform-origin:0 0;">9.</div>
<div style="position:absolute;left:1000.20px;top:666.19px;font-size:12.3px;line-height:12.3px;color:#666;white-space:nowrap;font-weight:bold;transform:scaleX(0.9000);transform-origin:0 0;font-weight:600;">So</div>
<div style="position:absolute;left:977.02px;top:691.49px;font-size:12.3px;line-height:12.3px;color:#333;white-space:nowrap;font-weight:bold;transform:scaleX(0.9700);transform-origin:0 0;">10.</div>
<div style="position:absolute;left:1000.20px;top:691.49px;font-size:12.3px;line-height:12.3px;color:#666;white-space:nowrap;font-weight:bold;transform:scaleX(0.9000);transform-origin:0 0;font-weight:600;">Ne</div>
<div style="position:absolute;left:977.67px;top:716.49px;font-size:12.3px;line-height:12.3px;color:#333;white-space:nowrap;font-weight:bold;transform:scaleX(0.9700);transform-origin:0 0;">11.</div>
<div style="position:absolute;left:1000.20px;top:716.49px;font-size:12.3px;line-height:12.3px;color:#666;white-space:nowrap;font-weight:bold;transform:scaleX(0.9000);transform-origin:0 0;font-weight:600;">Po</div>
<div style="position:absolute;left:977.02px;top:767.89px;font-size:12.3px;line-height:12.3px;color:#333;white-space:nowrap;font-weight:bold;transform:scaleX(0.9700);transform-origin:0 0;">12.</div>
<div style="position:absolute;left:1000.20px;top:767.89px;font-size:12.3px;line-height:12.3px;color:#666;white-space:nowrap;font-weight:bold;transform:scaleX(0.9000);transform-origin:0 0;font-weight:600;">Út</div>
<div style="position:absolute;left:977.02px;top:819.59px;font-size:12.3px;line-height:12.3px;color:#333;white-space:nowrap;font-weight:bold;transform:scaleX(0.9700);transform-origin:0 0;">13.</div>
<div style="position:absolute;left:1000.20px;top:819.59px;font-size:12.3px;line-height:12.3px;color:#666;white-space:nowrap;font-weight:bold;transform:scaleX(0.9000);transform-origin:0 0;font-weight:600;">St</div>
<div style="position:absolute;left:977.02px;top:870.79px;font-size:12.3px;line-height:12.3px;color:#333;white-space:nowrap;font-weight:bold;transform:scaleX(0.9700);transform-origin:0 0;">14.</div>
<div style="position:absolute;left:1000.20px;top:870.79px;font-size:12.3px;line-height:12.3px;color:#666;white-space:nowrap;font-weight:bold;transform:scaleX(0.9000);transform-origin:0 0;font-weight:600;">Čt</div>
<div style="position:absolute;left:977.02px;top:922.59px;font-size:12.3px;line-height:12.3px;color:#333;white-space:nowrap;font-weight:bold;transform:scaleX(0.9700);transform-origin:0 0;">15.</div>
<div style="position:absolute;left:1000.20px;top:922.59px;font-size:12.3px;line-height:12.3px;color:#666;white-space:nowrap;font-weight:bold;transform:scaleX(0.9000);transform-origin:0 0;font-weight:600;">Pá</div>
<div style="position:absolute;left:977.02px;top:973.19px;font-size:12.3px;line-height:12.3px;color:#333;white-space:nowrap;font-weight:bold;transform:scaleX(0.9700);transform-origin:0 0;">16.</div>
<div style="position:absolute;left:1000.20px;top:973.19px;font-size:12.3px;line-height:12.3px;color:#666;white-space:nowrap;font-weight:bold;transform:scaleX(0.9000);transform-origin:0 0;font-weight:600;">So</div>
<div style="position:absolute;left:977.02px;top:998.99px;font-size:12.3px;line-height:12.3px;color:#333;white-space:nowrap;font-weight:bold;transform:scaleX(0.9700);transform-origin:0 0;">17.</div>
<div style="position:absolute;left:1000.20px;top:998.99px;font-size:12.3px;line-height:12.3px;color:#666;white-space:nowrap;font-weight:bold;transform:scaleX(0.9000);transform-origin:0 0;font-weight:600;">Ne</div>
<div style="position:absolute;left:977.02px;top:1024.49px;font-size:12.3px;line-height:12.3px;color:#333;white-space:nowrap;font-weight:bold;transform:scaleX(0.9700);transform-origin:0 0;">18.</div>
<div style="position:absolute;left:1000.20px;top:1024.49px;font-size:12.3px;line-height:12.3px;color:#666;white-space:nowrap;font-weight:bold;transform:scaleX(0.9000);transform-origin:0 0;font-weight:600;">Po</div>
<div style="position:absolute;left:1361.64px;top:307.69px;font-size:12.3px;line-height:12.3px;color:#333;white-space:nowrap;font-weight:bold;transform:scaleX(0.9700);transform-origin:0 0;">1.</div>
<div style="position:absolute;left:1378.20px;top:307.69px;font-size:12.3px;line-height:12.3px;color:#666;white-space:nowrap;font-weight:bold;transform:scaleX(0.9000);transform-origin:0 0;font-weight:600;">Pá</div>
<div style="position:absolute;left:1361.64px;top:358.19px;font-size:12.3px;line-height:12.3px;color:#333;white-space:nowrap;font-weight:bold;transform:scaleX(0.9700);transform-origin:0 0;">2.</div>
<div style="position:absolute;left:1378.20px;top:358.19px;font-size:12.3px;line-height:12.3px;color:#666;white-space:nowrap;font-weight:bold;transform:scaleX(0.9000);transform-origin:0 0;font-weight:600;">So</div>
<div style="position:absolute;left:1361.64px;top:383.49px;font-size:12.3px;line-height:12.3px;color:#333;white-space:nowrap;font-weight:bold;transform:scaleX(0.9700);transform-origin:0 0;">3.</div>
<div style="position:absolute;left:1378.20px;top:383.49px;font-size:12.3px;line-height:12.3px;color:#666;white-space:nowrap;font-weight:bold;transform:scaleX(0.9000);transform-origin:0 0;font-weight:600;">Ne</div>
<div style="position:absolute;left:1361.64px;top:409.49px;font-size:12.3px;line-height:12.3px;color:#333;white-space:nowrap;font-weight:bold;transform:scaleX(0.9700);transform-origin:0 0;">4.</div>
<div style="position:absolute;left:1378.20px;top:409.49px;font-size:12.3px;line-height:12.3px;color:#666;white-space:nowrap;font-weight:bold;transform:scaleX(0.9000);transform-origin:0 0;font-weight:600;">Po</div>
<div style="position:absolute;left:1361.64px;top:460.39px;font-size:12.3px;line-height:12.3px;color:#333;white-space:nowrap;font-weight:bold;transform:scaleX(0.9700);transform-origin:0 0;">5.</div>
<div style="position:absolute;left:1378.20px;top:460.39px;font-size:12.3px;line-height:12.3px;color:#666;white-space:nowrap;font-weight:bold;transform:scaleX(0.9000);transform-origin:0 0;font-weight:600;">Út</div>
<div style="position:absolute;left:1361.64px;top:512.09px;font-size:12.3px;line-height:12.3px;color:#333;white-space:nowrap;font-weight:bold;transform:scaleX(0.9700);transform-origin:0 0;">6.</div>
<div style="position:absolute;left:1378.20px;top:512.09px;font-size:12.3px;line-height:12.3px;color:#666;white-space:nowrap;font-weight:bold;transform:scaleX(0.9000);transform-origin:0 0;font-weight:600;">St</div>
<div style="position:absolute;left:1361.64px;top:563.29px;font-size:12.3px;line-height:12.3px;color:#333;white-space:nowrap;font-weight:bold;transform:scaleX(0.9700);transform-origin:0 0;">7.</div>
<div style="position:absolute;left:1378.20px;top:563.29px;font-size:12.3px;line-height:12.3px;color:#666;white-space:nowrap;font-weight:bold;transform:scaleX(0.9000);transform-origin:0 0;font-weight:600;">Čt</div>
<div style="position:absolute;left:1361.64px;top:614.59px;font-size:12.3px;line-height:12.3px;color:#333;white-space:nowrap;font-weight:bold;transform:scaleX(0.9700);transform-origin:0 0;">8.</div>
<div style="position:absolute;left:1378.20px;top:614.59px;font-size:12.3px;line-height:12.3px;color:#666;white-space:nowrap;font-weight:bold;transform:scaleX(0.9000);transform-origin:0 0;font-weight:600;">Pá</div>
<div style="position:absolute;left:1361.64px;top:666.19px;font-size:12.3px;line-height:12.3px;color:#333;white-space:nowrap;font-weight:bold;transform:scaleX(0.9700);transform-origin:0 0;">9.</div>
<div style="position:absolute;left:1378.20px;top:666.19px;font-size:12.3px;line-height:12.3px;color:#666;white-space:nowrap;font-weight:bold;transform:scaleX(0.9000);transform-origin:0 0;font-weight:600;">So</div>
<div style="position:absolute;left:1355.02px;top:691.49px;font-size:12.3px;line-height:12.3px;color:#333;white-space:nowrap;font-weight:bold;transform:scaleX(0.9700);transform-origin:0 0;">10.</div>
<div style="position:absolute;left:1378.20px;top:691.49px;font-size:12.3px;line-height:12.3px;color:#666;white-space:nowrap;font-weight:bold;transform:scaleX(0.9000);transform-origin:0 0;font-weight:600;">Ne</div>
<div style="position:absolute;left:1355.67px;top:716.49px;font-size:12.3px;line-height:12.3px;color:#333;white-space:nowrap;font-weight:bold;transform:scaleX(0.9700);transform-origin:0 0;">11.</div>
<div style="position:absolute;left:1378.20px;top:716.49px;font-size:12.3px;line-height:12.3px;color:#666;white-space:nowrap;font-weight:bold;transform:scaleX(0.9000);transform-origin:0 0;font-weight:600;">Po</div>
<div style="position:absolute;left:1355.02px;top:767.89px;font-size:12.3px;line-height:12.3px;color:#333;white-space:nowrap;font-weight:bold;transform:scaleX(0.9700);transform-origin:0 0;">12.</div>
<div style="position:absolute;left:1378.20px;top:767.89px;font-size:12.3px;line-height:12.3px;color:#666;white-space:nowrap;font-weight:bold;transform:scaleX(0.9000);transform-origin:0 0;font-weight:600;">Út</div>
<div style="position:absolute;left:1355.02px;top:819.59px;font-size:12.3px;line-height:12.3px;color:#333;white-space:nowrap;font-weight:bold;transform:scaleX(0.9700);transform-origin:0 0;">13.</div>
<div style="position:absolute;left:1378.20px;top:819.59px;font-size:12.3px;line-height:12.3px;color:#666;white-space:nowrap;font-weight:bold;transform:scaleX(0.9000);transform-origin:0 0;font-weight:600;">St</div>
<div style="position:absolute;left:1355.02px;top:870.79px;font-size:12.3px;line-height:12.3px;color:#333;white-space:nowrap;font-weight:bold;transform:scaleX(0.9700);transform-origin:0 0;">14.</div>
<div style="position:absolute;left:1378.20px;top:870.79px;font-size:12.3px;line-height:12.3px;color:#666;white-space:nowrap;font-weight:bold;transform:scaleX(0.9000);transform-origin:0 0;font-weight:600;">Čt</div>
<div style="position:absolute;left:1355.02px;top:922.59px;font-size:12.3px;line-height:12.3px;color:#333;white-space:nowrap;font-weight:bold;transform:scaleX(0.9700);transform-origin:0 0;">15.</div>
<div style="position:absolute;left:1378.20px;top:922.59px;font-size:12.3px;line-height:12.3px;color:#666;white-space:nowrap;font-weight:bold;transform:scaleX(0.9000);transform-origin:0 0;font-weight:600;">Pá</div>
<div style="position:absolute;left:1355.02px;top:973.19px;font-size:12.3px;line-height:12.3px;color:#333;white-space:nowrap;font-weight:bold;transform:scaleX(0.9700);transform-origin:0 0;">16.</div>
<div style="position:absolute;left:1378.20px;top:973.19px;font-size:12.3px;line-height:12.3px;color:#666;white-space:nowrap;font-weight:bold;transform:scaleX(0.9000);transform-origin:0 0;font-weight:600;">So</div>
<div style="position:absolute;left:1355.02px;top:998.99px;font-size:12.3px;line-height:12.3px;color:#333;white-space:nowrap;font-weight:bold;transform:scaleX(0.9700);transform-origin:0 0;">17.</div>
<div style="position:absolute;left:1378.20px;top:998.99px;font-size:12.3px;line-height:12.3px;color:#666;white-space:nowrap;font-weight:bold;transform:scaleX(0.9000);transform-origin:0 0;font-weight:600;">Ne</div>
<div style="position:absolute;left:1355.02px;top:1024.49px;font-size:12.3px;line-height:12.3px;color:#333;white-space:nowrap;font-weight:bold;transform:scaleX(0.9700);transform-origin:0 0;">18.</div>
<div style="position:absolute;left:1378.20px;top:1024.49px;font-size:12.3px;line-height:12.3px;color:#666;white-space:nowrap;font-weight:bold;transform:scaleX(0.9000);transform-origin:0 0;font-weight:600;">Po</div>
<div style="position:absolute;left:371.1px;top:305.5px;width:141.2px;height:17.6px;background:#9dc4ab;border-radius:4.5px;box-shadow:0 1px 2px rgba(0,0,0,0.22);"></div>
<div style="position:absolute;left:377.00px;top:309.04px;font-size:12px;line-height:12px;color:#2b2b2b;white-space:nowrap;transform:scaleX(0.9118);transform-origin:0 0;">07:00 - 10:00</div>
<div style="position:absolute;left:371.1px;top:328.9px;width:141.2px;height:17.6px;background:#9dc4ab;border-radius:4.5px;box-shadow:0 1px 2px rgba(0,0,0,0.22);"></div>
<div style="position:absolute;left:377.00px;top:332.44px;font-size:12px;line-height:12px;color:#2b2b2b;white-space:nowrap;transform:scaleX(0.9121);transform-origin:0 0;">11:00 - 15:00</div>
<div style="position:absolute;left:522.1px;top:305.5px;width:141.2px;height:17.6px;background:#9dc4ab;border-radius:4.5px;box-shadow:0 1px 2px rgba(0,0,0,0.22);"></div>
<div style="position:absolute;left:528.00px;top:309.04px;font-size:12px;line-height:12px;color:#2b2b2b;white-space:nowrap;transform:scaleX(0.9118);transform-origin:0 0;">07:00 - 19:00</div>
<div style="position:absolute;left:673.1px;top:305.5px;width:141.2px;height:17.6px;background:#b0b0b0;border-radius:4.5px;box-shadow:0 1px 2px rgba(0,0,0,0.22);"></div>
<div style="position:absolute;left:679.00px;top:309.04px;font-size:12px;line-height:12px;color:#2b2b2b;white-space:nowrap;transform:scaleX(0.9118);transform-origin:0 0;">07:00 - 12:00</div>
<div style="position:absolute;left:673.1px;top:328.9px;width:141.2px;height:17.6px;background:#ecc1a6;border-radius:4.5px;box-shadow:0 1px 2px rgba(0,0,0,0.22);"></div>
<div style="position:absolute;left:679.00px;top:332.44px;font-size:12px;line-height:12px;color:#2b2b2b;white-space:nowrap;transform:scaleX(0.9005);transform-origin:0 0;">12:00 - 15:00</div>
<div style="position:absolute;left:824.1px;top:305.5px;width:141.2px;height:17.6px;background:#ecc1a6;border-radius:4.5px;box-shadow:0 1px 2px rgba(0,0,0,0.22);"></div>
<div style="position:absolute;left:830.00px;top:309.04px;font-size:12px;line-height:12px;color:#2b2b2b;white-space:nowrap;transform:scaleX(0.9118);transform-origin:0 0;">07:00 - 12:00</div>
<div style="position:absolute;left:824.1px;top:328.9px;width:141.2px;height:17.6px;background:#cde69b;border-radius:4.5px;box-shadow:0 1px 2px rgba(0,0,0,0.22);"></div>
<div style="position:absolute;left:830.00px;top:332.44px;font-size:12px;line-height:12px;color:#2b2b2b;white-space:nowrap;transform:scaleX(0.9005);transform-origin:0 0;">12:00 - 15:00</div>
<div style="position:absolute;left:1050.1px;top:305.5px;width:141.2px;height:17.6px;background:#83d4a7;border-radius:4.5px;box-shadow:0 1px 2px rgba(0,0,0,0.22);"></div>
<div style="position:absolute;left:1056.00px;top:309.04px;font-size:12px;line-height:12px;color:#2b2b2b;white-space:nowrap;transform:scaleX(0.9118);transform-origin:0 0;">07:00 - 15:30</div>
<div style="position:absolute;left:1201.1px;top:305.5px;width:142.2px;height:17.6px;background:#b0b0b0;border-radius:4.5px;box-shadow:0 1px 2px rgba(0,0,0,0.22);"></div>
<div style="position:absolute;left:1207.00px;top:309.04px;font-size:12px;line-height:12px;color:#2b2b2b;white-space:nowrap;transform:scaleX(0.9118);transform-origin:0 0;">09:00 - 17:30</div>
<div style="position:absolute;left:1428.1px;top:305.5px;width:141.7px;height:17.6px;background:#c59af0;border-radius:4.5px;box-shadow:0 1px 2px rgba(0,0,0,0.22);"></div>
<div style="position:absolute;left:1434.00px;top:309.04px;font-size:12px;line-height:12px;color:#2b2b2b;white-space:nowrap;transform:scaleX(0.9118);transform-origin:0 0;">07:00 - 12:00</div>
<div style="position:absolute;left:522.1px;top:407.29999999999995px;width:141.2px;height:17.6px;background:#9dc4ab;border-radius:4.5px;box-shadow:0 1px 2px rgba(0,0,0,0.22);"></div>
<div style="position:absolute;left:528.00px;top:410.84px;font-size:12px;line-height:12px;color:#2b2b2b;white-space:nowrap;transform:scaleX(0.9118);transform-origin:0 0;">07:00 - 19:00</div>
<div style="position:absolute;left:673.1px;top:407.29999999999995px;width:141.2px;height:17.6px;background:#ecc1a6;border-radius:4.5px;box-shadow:0 1px 2px rgba(0,0,0,0.22);"></div>
<div style="position:absolute;left:679.00px;top:410.84px;font-size:12px;line-height:12px;color:#2b2b2b;white-space:nowrap;transform:scaleX(0.9005);transform-origin:0 0;">12:00 - 15:00</div>
<div style="position:absolute;left:824.1px;top:407.29999999999995px;width:141.2px;height:17.6px;background:#ecc1a6;border-radius:4.5px;box-shadow:0 1px 2px rgba(0,0,0,0.22);"></div>
<div style="position:absolute;left:830.00px;top:410.84px;font-size:12px;line-height:12px;color:#2b2b2b;white-space:nowrap;transform:scaleX(0.9118);transform-origin:0 0;">07:00 - 12:00</div>
<div style="position:absolute;left:824.1px;top:430.69999999999993px;width:141.2px;height:17.6px;background:#cde69b;border-radius:4.5px;box-shadow:0 1px 2px rgba(0,0,0,0.22);"></div>
<div style="position:absolute;left:830.00px;top:434.24px;font-size:12px;line-height:12px;color:#2b2b2b;white-space:nowrap;transform:scaleX(0.9005);transform-origin:0 0;">12:00 - 15:00</div>
<div style="position:absolute;left:1050.1px;top:407.29999999999995px;width:141.2px;height:17.6px;background:#83d4a7;border-radius:4.5px;box-shadow:0 1px 2px rgba(0,0,0,0.22);"></div>
<div style="position:absolute;left:1056.00px;top:410.84px;font-size:12px;line-height:12px;color:#2b2b2b;white-space:nowrap;transform:scaleX(0.9118);transform-origin:0 0;">07:00 - 15:30</div>
<div style="position:absolute;left:1206.50px;top:411.27px;font-size:11.5px;line-height:11.5px;color:#333;white-space:nowrap;transform:scaleX(0.9600);transform-origin:0 0;">Svatba</div>
<div style="position:absolute;left:1433.50px;top:411.27px;font-size:11.5px;line-height:11.5px;color:#333;white-space:nowrap;transform:scaleX(0.9600);transform-origin:0 0;">Školení</div>
<div style="position:absolute;left:673.1px;top:458.2px;width:141.2px;height:17.6px;background:#b0b0b0;border-radius:4.5px;box-shadow:0 1px 2px rgba(0,0,0,0.22);"></div>
<div style="position:absolute;left:679.00px;top:461.74px;font-size:12px;line-height:12px;color:#2b2b2b;white-space:nowrap;transform:scaleX(0.9118);transform-origin:0 0;">07:00 - 12:00</div>
<div style="position:absolute;left:673.1px;top:481.59999999999997px;width:141.2px;height:17.6px;background:#ecc1a6;border-radius:4.5px;box-shadow:0 1px 2px rgba(0,0,0,0.22);"></div>
<div style="position:absolute;left:679.00px;top:485.14px;font-size:12px;line-height:12px;color:#2b2b2b;white-space:nowrap;transform:scaleX(0.9005);transform-origin:0 0;">12:00 - 15:00</div>
<div style="position:absolute;left:824.1px;top:458.2px;width:141.2px;height:17.6px;background:#ecc1a6;border-radius:4.5px;box-shadow:0 1px 2px rgba(0,0,0,0.22);"></div>
<div style="position:absolute;left:830.00px;top:461.74px;font-size:12px;line-height:12px;color:#2b2b2b;white-space:nowrap;transform:scaleX(0.9118);transform-origin:0 0;">07:00 - 12:00</div>
<div style="position:absolute;left:1055.50px;top:462.17px;font-size:11.5px;line-height:11.5px;color:#333;white-space:nowrap;transform:scaleX(0.9600);transform-origin:0 0;">Dovolená - Celý den</div>
<div style="position:absolute;left:1201.1px;top:458.2px;width:142.2px;height:17.6px;background:#83d4a7;border-radius:4.5px;box-shadow:0 1px 2px rgba(0,0,0,0.22);"></div>
<div style="position:absolute;left:1207.00px;top:461.74px;font-size:12px;line-height:12px;color:#2b2b2b;white-space:nowrap;transform:scaleX(0.9005);transform-origin:0 0;">12:00 - 18:00</div>
<div style="position:absolute;left:1433.50px;top:462.17px;font-size:11.5px;line-height:11.5px;color:#333;white-space:nowrap;transform:scaleX(0.9600);transform-origin:0 0;">Školení</div>
<div style="position:absolute;left:522.1px;top:509.9px;width:141.2px;height:17.6px;background:#9dc4ab;border-radius:4.5px;box-shadow:0 1px 2px rgba(0,0,0,0.22);"></div>
<div style="position:absolute;left:528.00px;top:513.44px;font-size:12px;line-height:12px;color:#2b2b2b;white-space:nowrap;transform:scaleX(0.9118);transform-origin:0 0;">07:00 - 19:00</div>
<div style="position:absolute;left:673.1px;top:509.9px;width:141.2px;height:17.6px;background:#ecc1a6;border-radius:4.5px;box-shadow:0 1px 2px rgba(0,0,0,0.22);"></div>
<div style="position:absolute;left:679.00px;top:513.44px;font-size:12px;line-height:12px;color:#2b2b2b;white-space:nowrap;transform:scaleX(0.9005);transform-origin:0 0;">12:00 - 15:00</div>
<div style="position:absolute;left:824.1px;top:509.9px;width:141.2px;height:17.6px;background:#ecc1a6;border-radius:4.5px;box-shadow:0 1px 2px rgba(0,0,0,0.22);"></div>
<div style="position:absolute;left:830.00px;top:513.44px;font-size:12px;line-height:12px;color:#2b2b2b;white-space:nowrap;transform:scaleX(0.9118);transform-origin:0 0;">07:00 - 12:00</div>
<div style="position:absolute;left:824.1px;top:533.3px;width:141.2px;height:17.6px;background:#cde69b;border-radius:4.5px;box-shadow:0 1px 2px rgba(0,0,0,0.22);"></div>
<div style="position:absolute;left:830.00px;top:536.84px;font-size:12px;line-height:12px;color:#2b2b2b;white-space:nowrap;transform:scaleX(0.9005);transform-origin:0 0;">12:00 - 15:00</div>
<div style="position:absolute;left:1050.1px;top:509.9px;width:141.2px;height:17.6px;background:#83d4a7;border-radius:4.5px;box-shadow:0 1px 2px rgba(0,0,0,0.22);"></div>
<div style="position:absolute;left:1056.00px;top:513.44px;font-size:12px;line-height:12px;color:#2b2b2b;white-space:nowrap;transform:scaleX(0.9118);transform-origin:0 0;">07:00 - 15:30</div>
<div style="position:absolute;left:1201.1px;top:509.9px;width:142.2px;height:17.6px;background:#b0b0b0;border-radius:4.5px;box-shadow:0 1px 2px rgba(0,0,0,0.22);"></div>
<div style="position:absolute;left:1207.00px;top:513.44px;font-size:12px;line-height:12px;color:#2b2b2b;white-space:nowrap;transform:scaleX(0.9118);transform-origin:0 0;">09:00 - 17:30</div>
<div style="position:absolute;left:1433.50px;top:513.87px;font-size:11.5px;line-height:11.5px;color:#333;white-space:nowrap;transform:scaleX(0.9600);transform-origin:0 0;">Školení</div>
<div style="position:absolute;left:673.1px;top:561.1px;width:141.2px;height:17.6px;background:#b0b0b0;border-radius:4.5px;box-shadow:0 1px 2px rgba(0,0,0,0.22);"></div>
<div style="position:absolute;left:679.00px;top:564.64px;font-size:12px;line-height:12px;color:#2b2b2b;white-space:nowrap;transform:scaleX(0.9118);transform-origin:0 0;">07:00 - 12:00</div>
<div style="position:absolute;left:673.1px;top:584.5px;width:141.2px;height:17.6px;background:#ecc1a6;border-radius:4.5px;box-shadow:0 1px 2px rgba(0,0,0,0.22);"></div>
<div style="position:absolute;left:679.00px;top:588.04px;font-size:12px;line-height:12px;color:#2b2b2b;white-space:nowrap;transform:scaleX(0.9005);transform-origin:0 0;">12:00 - 15:00</div>
<div style="position:absolute;left:824.1px;top:561.1px;width:141.2px;height:17.6px;background:#ecc1a6;border-radius:4.5px;box-shadow:0 1px 2px rgba(0,0,0,0.22);"></div>
<div style="position:absolute;left:830.00px;top:564.64px;font-size:12px;line-height:12px;color:#2b2b2b;white-space:nowrap;transform:scaleX(0.9118);transform-origin:0 0;">07:00 - 12:00</div>
<div style="position:absolute;left:1050.1px;top:561.1px;width:141.2px;height:17.6px;background:#b0b0b0;border-radius:4.5px;box-shadow:0 1px 2px rgba(0,0,0,0.22);"></div>
<div style="position:absolute;left:1056.00px;top:564.64px;font-size:12px;line-height:12px;color:#2b2b2b;white-space:nowrap;transform:scaleX(0.9118);transform-origin:0 0;">08:00 - 16:30</div>
<div style="position:absolute;left:1201.1px;top:561.1px;width:142.2px;height:17.6px;background:#83d4a7;border-radius:4.5px;box-shadow:0 1px 2px rgba(0,0,0,0.22);"></div>
<div style="position:absolute;left:1207.00px;top:564.64px;font-size:12px;line-height:12px;color:#2b2b2b;white-space:nowrap;transform:scaleX(0.9005);transform-origin:0 0;">12:00 - 18:00</div>
<div style="position:absolute;left:1433.50px;top:565.07px;font-size:11.5px;line-height:11.5px;color:#333;white-space:nowrap;transform:scaleX(0.9600);transform-origin:0 0;">Školení</div>
<div style="position:absolute;left:522.1px;top:612.4px;width:141.2px;height:17.6px;background:#9dc4ab;border-radius:4.5px;box-shadow:0 1px 2px rgba(0,0,0,0.22);"></div>
<div style="position:absolute;left:528.00px;top:615.94px;font-size:12px;line-height:12px;color:#2b2b2b;white-space:nowrap;transform:scaleX(0.9118);transform-origin:0 0;">07:00 - 19:00</div>
<div style="position:absolute;left:673.1px;top:612.4px;width:141.2px;height:17.6px;background:#b0b0b0;border-radius:4.5px;box-shadow:0 1px 2px rgba(0,0,0,0.22);"></div>
<div style="position:absolute;left:679.00px;top:615.94px;font-size:12px;line-height:12px;color:#2b2b2b;white-space:nowrap;transform:scaleX(0.9118);transform-origin:0 0;">07:00 - 12:00</div>
<div style="position:absolute;left:673.1px;top:635.8px;width:141.2px;height:17.6px;background:#ecc1a6;border-radius:4.5px;box-shadow:0 1px 2px rgba(0,0,0,0.22);"></div>
<div style="position:absolute;left:679.00px;top:639.34px;font-size:12px;line-height:12px;color:#2b2b2b;white-space:nowrap;transform:scaleX(0.9005);transform-origin:0 0;">12:00 - 15:00</div>
<div style="position:absolute;left:824.1px;top:612.4px;width:141.2px;height:17.6px;background:#ecc1a6;border-radius:4.5px;box-shadow:0 1px 2px rgba(0,0,0,0.22);"></div>
<div style="position:absolute;left:830.00px;top:615.94px;font-size:12px;line-height:12px;color:#2b2b2b;white-space:nowrap;transform:scaleX(0.9118);transform-origin:0 0;">07:00 - 12:00</div>
<div style="position:absolute;left:824.1px;top:635.8px;width:141.2px;height:17.6px;background:#cde69b;border-radius:4.5px;box-shadow:0 1px 2px rgba(0,0,0,0.22);"></div>
<div style="position:absolute;left:830.00px;top:639.34px;font-size:12px;line-height:12px;color:#2b2b2b;white-space:nowrap;transform:scaleX(0.9005);transform-origin:0 0;">12:00 - 15:00</div>
<div style="position:absolute;left:1050.1px;top:612.4px;width:141.2px;height:17.6px;background:#83d4a7;border-radius:4.5px;box-shadow:0 1px 2px rgba(0,0,0,0.22);"></div>
<div style="position:absolute;left:1056.00px;top:615.94px;font-size:12px;line-height:12px;color:#2b2b2b;white-space:nowrap;transform:scaleX(0.9118);transform-origin:0 0;">07:00 - 15:30</div>
<div style="position:absolute;left:1206.50px;top:616.37px;font-size:11.5px;line-height:11.5px;color:#333;white-space:nowrap;transform:scaleX(0.9600);transform-origin:0 0;">Nemoc</div>
<div style="position:absolute;left:1433.50px;top:616.37px;font-size:11.5px;line-height:11.5px;color:#333;white-space:nowrap;transform:scaleX(0.9600);transform-origin:0 0;">Školení</div>
<div style="position:absolute;left:522.1px;top:714.3px;width:141.2px;height:17.6px;background:#9dc4ab;border-radius:4.5px;box-shadow:0 1px 2px rgba(0,0,0,0.22);"></div>
<div style="position:absolute;left:528.00px;top:717.84px;font-size:12px;line-height:12px;color:#2b2b2b;white-space:nowrap;transform:scaleX(0.9118);transform-origin:0 0;">07:00 - 19:00</div>
<div style="position:absolute;left:673.1px;top:714.3px;width:141.2px;height:17.6px;background:#ecc1a6;border-radius:4.5px;box-shadow:0 1px 2px rgba(0,0,0,0.22);"></div>
<div style="position:absolute;left:679.00px;top:717.84px;font-size:12px;line-height:12px;color:#2b2b2b;white-space:nowrap;transform:scaleX(0.9005);transform-origin:0 0;">12:00 - 15:00</div>
<div style="position:absolute;left:824.1px;top:714.3px;width:141.2px;height:17.6px;background:#ecc1a6;border-radius:4.5px;box-shadow:0 1px 2px rgba(0,0,0,0.22);"></div>
<div style="position:absolute;left:830.00px;top:717.84px;font-size:12px;line-height:12px;color:#2b2b2b;white-space:nowrap;transform:scaleX(0.9118);transform-origin:0 0;">07:00 - 12:00</div>
<div style="position:absolute;left:824.1px;top:737.6999999999999px;width:141.2px;height:17.6px;background:#cde69b;border-radius:4.5px;box-shadow:0 1px 2px rgba(0,0,0,0.22);"></div>
<div style="position:absolute;left:830.00px;top:741.24px;font-size:12px;line-height:12px;color:#2b2b2b;white-space:nowrap;transform:scaleX(0.9005);transform-origin:0 0;">12:00 - 15:00</div>
<div style="position:absolute;left:1050.1px;top:714.3px;width:141.2px;height:17.6px;background:#83d4a7;border-radius:4.5px;box-shadow:0 1px 2px rgba(0,0,0,0.22);"></div>
<div style="position:absolute;left:1056.00px;top:717.84px;font-size:12px;line-height:12px;color:#2b2b2b;white-space:nowrap;transform:scaleX(0.9118);transform-origin:0 0;">07:00 - 15:30</div>
<div style="position:absolute;left:1201.1px;top:714.3px;width:142.2px;height:17.6px;background:#b0b0b0;border-radius:4.5px;box-shadow:0 1px 2px rgba(0,0,0,0.22);"></div>
<div style="position:absolute;left:1207.00px;top:717.84px;font-size:12px;line-height:12px;color:#2b2b2b;white-space:nowrap;transform:scaleX(0.9118);transform-origin:0 0;">09:00 - 17:30</div>
<div style="position:absolute;left:1428.1px;top:714.3px;width:141.7px;height:17.6px;background:#c59af0;border-radius:4.5px;box-shadow:0 1px 2px rgba(0,0,0,0.22);"></div>
<div style="position:absolute;left:1434.00px;top:717.84px;font-size:12px;line-height:12px;color:#2b2b2b;white-space:nowrap;transform:scaleX(0.9118);transform-origin:0 0;">07:00 - 12:00</div>
<div style="position:absolute;left:673.1px;top:765.6999999999999px;width:141.2px;height:17.6px;background:#b0b0b0;border-radius:4.5px;box-shadow:0 1px 2px rgba(0,0,0,0.22);"></div>
<div style="position:absolute;left:679.00px;top:769.24px;font-size:12px;line-height:12px;color:#2b2b2b;white-space:nowrap;transform:scaleX(0.9118);transform-origin:0 0;">07:00 - 12:00</div>
<div style="position:absolute;left:673.1px;top:789.0999999999999px;width:141.2px;height:17.6px;background:#ecc1a6;border-radius:4.5px;box-shadow:0 1px 2px rgba(0,0,0,0.22);"></div>
<div style="position:absolute;left:679.00px;top:792.64px;font-size:12px;line-height:12px;color:#2b2b2b;white-space:nowrap;transform:scaleX(0.9005);transform-origin:0 0;">12:00 - 15:00</div>
<div style="position:absolute;left:824.1px;top:765.6999999999999px;width:141.2px;height:17.6px;background:#ecc1a6;border-radius:4.5px;box-shadow:0 1px 2px rgba(0,0,0,0.22);"></div>
<div style="position:absolute;left:830.00px;top:769.24px;font-size:12px;line-height:12px;color:#2b2b2b;white-space:nowrap;transform:scaleX(0.9118);transform-origin:0 0;">07:00 - 12:00</div>
<div style="position:absolute;left:1055.50px;top:769.67px;font-size:11.5px;line-height:11.5px;color:#333;white-space:nowrap;transform:scaleX(0.9600);transform-origin:0 0;">Lékař</div>
<div style="position:absolute;left:1050.1px;top:789.0999999999999px;width:141.2px;height:17.6px;background:#b0b0b0;border-radius:4.5px;box-shadow:0 1px 2px rgba(0,0,0,0.22);"></div>
<div style="position:absolute;left:1056.00px;top:792.64px;font-size:12px;line-height:12px;color:#2b2b2b;white-space:nowrap;transform:scaleX(0.9005);transform-origin:0 0;">12:00 - 15:30</div>
<div style="position:absolute;left:1201.1px;top:765.6999999999999px;width:142.2px;height:17.6px;background:#83d4a7;border-radius:4.5px;box-shadow:0 1px 2px rgba(0,0,0,0.22);"></div>
<div style="position:absolute;left:1207.00px;top:769.24px;font-size:12px;line-height:12px;color:#2b2b2b;white-space:nowrap;transform:scaleX(0.9005);transform-origin:0 0;">12:00 - 18:00</div>
<div style="position:absolute;left:522.1px;top:817.4px;width:141.2px;height:17.6px;background:#9dc4ab;border-radius:4.5px;box-shadow:0 1px 2px rgba(0,0,0,0.22);"></div>
<div style="position:absolute;left:528.00px;top:820.94px;font-size:12px;line-height:12px;color:#2b2b2b;white-space:nowrap;transform:scaleX(0.9118);transform-origin:0 0;">07:00 - 19:00</div>
<div style="position:absolute;left:673.1px;top:817.4px;width:141.2px;height:17.6px;background:#ecc1a6;border-radius:4.5px;box-shadow:0 1px 2px rgba(0,0,0,0.22);"></div>
<div style="position:absolute;left:679.00px;top:820.94px;font-size:12px;line-height:12px;color:#2b2b2b;white-space:nowrap;transform:scaleX(0.9005);transform-origin:0 0;">12:00 - 15:00</div>
<div style="position:absolute;left:824.1px;top:817.4px;width:141.2px;height:17.6px;background:#ecc1a6;border-radius:4.5px;box-shadow:0 1px 2px rgba(0,0,0,0.22);"></div>
<div style="position:absolute;left:830.00px;top:820.94px;font-size:12px;line-height:12px;color:#2b2b2b;white-space:nowrap;transform:scaleX(0.9118);transform-origin:0 0;">07:00 - 12:00</div>
<div style="position:absolute;left:824.1px;top:840.8px;width:141.2px;height:17.6px;background:#cde69b;border-radius:4.5px;box-shadow:0 1px 2px rgba(0,0,0,0.22);"></div>
<div style="position:absolute;left:830.00px;top:844.34px;font-size:12px;line-height:12px;color:#2b2b2b;white-space:nowrap;transform:scaleX(0.9005);transform-origin:0 0;">12:00 - 15:00</div>
<div style="position:absolute;left:1050.1px;top:817.4px;width:141.2px;height:17.6px;background:#83d4a7;border-radius:4.5px;box-shadow:0 1px 2px rgba(0,0,0,0.22);"></div>
<div style="position:absolute;left:1056.00px;top:820.94px;font-size:12px;line-height:12px;color:#2b2b2b;white-space:nowrap;transform:scaleX(0.9118);transform-origin:0 0;">07:00 - 15:30</div>
<div style="position:absolute;left:1201.1px;top:817.4px;width:142.2px;height:17.6px;background:#b0b0b0;border-radius:4.5px;box-shadow:0 1px 2px rgba(0,0,0,0.22);"></div>
<div style="position:absolute;left:1207.00px;top:820.94px;font-size:12px;line-height:12px;color:#2b2b2b;white-space:nowrap;transform:scaleX(0.9118);transform-origin:0 0;">09:00 - 17:30</div>
<div style="position:absolute;left:1428.1px;top:817.4px;width:141.7px;height:17.6px;background:#c59af0;border-radius:4.5px;box-shadow:0 1px 2px rgba(0,0,0,0.22);"></div>
<div style="position:absolute;left:1434.00px;top:820.94px;font-size:12px;line-height:12px;color:#2b2b2b;white-space:nowrap;transform:scaleX(0.9118);transform-origin:0 0;">07:00 - 12:00</div>
<div style="position:absolute;left:673.1px;top:868.6px;width:141.2px;height:17.6px;background:#b0b0b0;border-radius:4.5px;box-shadow:0 1px 2px rgba(0,0,0,0.22);"></div>
<div style="position:absolute;left:679.00px;top:872.14px;font-size:12px;line-height:12px;color:#2b2b2b;white-space:nowrap;transform:scaleX(0.9118);transform-origin:0 0;">07:00 - 12:00</div>
<div style="position:absolute;left:673.1px;top:892.0px;width:141.2px;height:17.6px;background:#ecc1a6;border-radius:4.5px;box-shadow:0 1px 2px rgba(0,0,0,0.22);"></div>
<div style="position:absolute;left:679.00px;top:895.54px;font-size:12px;line-height:12px;color:#2b2b2b;white-space:nowrap;transform:scaleX(0.9005);transform-origin:0 0;">12:00 - 15:00</div>
<div style="position:absolute;left:824.1px;top:868.6px;width:141.2px;height:17.6px;background:#ecc1a6;border-radius:4.5px;box-shadow:0 1px 2px rgba(0,0,0,0.22);"></div>
<div style="position:absolute;left:830.00px;top:872.14px;font-size:12px;line-height:12px;color:#2b2b2b;white-space:nowrap;transform:scaleX(0.9118);transform-origin:0 0;">07:00 - 12:00</div>
<div style="position:absolute;left:1050.1px;top:868.6px;width:141.2px;height:17.6px;background:#b0b0b0;border-radius:4.5px;box-shadow:0 1px 2px rgba(0,0,0,0.22);"></div>
<div style="position:absolute;left:1056.00px;top:872.14px;font-size:12px;line-height:12px;color:#2b2b2b;white-space:nowrap;transform:scaleX(0.9118);transform-origin:0 0;">08:00 - 16:30</div>
<div style="position:absolute;left:1201.1px;top:868.6px;width:142.2px;height:17.6px;background:#83d4a7;border-radius:4.5px;box-shadow:0 1px 2px rgba(0,0,0,0.22);"></div>
<div style="position:absolute;left:1207.00px;top:872.14px;font-size:12px;line-height:12px;color:#2b2b2b;white-space:nowrap;transform:scaleX(0.9005);transform-origin:0 0;">12:00 - 18:00</div>
<div style="position:absolute;left:522.1px;top:920.4px;width:141.2px;height:17.6px;background:#9dc4ab;border-radius:4.5px;box-shadow:0 1px 2px rgba(0,0,0,0.22);"></div>
<div style="position:absolute;left:528.00px;top:923.94px;font-size:12px;line-height:12px;color:#2b2b2b;white-space:nowrap;transform:scaleX(0.9118);transform-origin:0 0;">07:00 - 19:00</div>
<div style="position:absolute;left:673.1px;top:920.4px;width:141.2px;height:17.6px;background:#b0b0b0;border-radius:4.5px;box-shadow:0 1px 2px rgba(0,0,0,0.22);"></div>
<div style="position:absolute;left:679.00px;top:923.94px;font-size:12px;line-height:12px;color:#2b2b2b;white-space:nowrap;transform:scaleX(0.9118);transform-origin:0 0;">07:00 - 12:00</div>
<div style="position:absolute;left:673.1px;top:943.8px;width:141.2px;height:17.6px;background:#ecc1a6;border-radius:4.5px;box-shadow:0 1px 2px rgba(0,0,0,0.22);"></div>
<div style="position:absolute;left:679.00px;top:947.34px;font-size:12px;line-height:12px;color:#2b2b2b;white-space:nowrap;transform:scaleX(0.9005);transform-origin:0 0;">12:00 - 15:00</div>
<div style="position:absolute;left:824.1px;top:920.4px;width:141.2px;height:17.6px;background:#ecc1a6;border-radius:4.5px;box-shadow:0 1px 2px rgba(0,0,0,0.22);"></div>
<div style="position:absolute;left:830.00px;top:923.94px;font-size:12px;line-height:12px;color:#2b2b2b;white-space:nowrap;transform:scaleX(0.9118);transform-origin:0 0;">07:00 - 12:00</div>
<div style="position:absolute;left:824.1px;top:943.8px;width:141.2px;height:17.6px;background:#cde69b;border-radius:4.5px;box-shadow:0 1px 2px rgba(0,0,0,0.22);"></div>
<div style="position:absolute;left:830.00px;top:947.34px;font-size:12px;line-height:12px;color:#2b2b2b;white-space:nowrap;transform:scaleX(0.9005);transform-origin:0 0;">12:00 - 15:00</div>
<div style="position:absolute;left:1050.1px;top:920.4px;width:141.2px;height:17.6px;background:#83d4a7;border-radius:4.5px;box-shadow:0 1px 2px rgba(0,0,0,0.22);"></div>
<div style="position:absolute;left:1056.00px;top:923.94px;font-size:12px;line-height:12px;color:#2b2b2b;white-space:nowrap;transform:scaleX(0.9118);transform-origin:0 0;">07:00 - 15:30</div>
<div style="position:absolute;left:1201.1px;top:920.4px;width:142.2px;height:17.6px;background:#b0b0b0;border-radius:4.5px;box-shadow:0 1px 2px rgba(0,0,0,0.22);"></div>
<div style="position:absolute;left:1207.00px;top:923.94px;font-size:12px;line-height:12px;color:#2b2b2b;white-space:nowrap;transform:scaleX(0.9118);transform-origin:0 0;">09:00 - 17:30</div>
<div style="position:absolute;left:1428.1px;top:920.4px;width:141.7px;height:17.6px;background:#c59af0;border-radius:4.5px;box-shadow:0 1px 2px rgba(0,0,0,0.22);"></div>
<div style="position:absolute;left:1434.00px;top:923.94px;font-size:12px;line-height:12px;color:#2b2b2b;white-space:nowrap;transform:scaleX(0.9118);transform-origin:0 0;">07:00 - 12:00</div>
<div style="position:absolute;left:522.1px;top:1022.3px;width:141.2px;height:17.6px;background:#9dc4ab;border-radius:4.5px;box-shadow:0 1px 2px rgba(0,0,0,0.22);"></div>
<div style="position:absolute;left:528.00px;top:1025.84px;font-size:12px;line-height:12px;color:#2b2b2b;white-space:nowrap;transform:scaleX(0.9118);transform-origin:0 0;">07:00 - 19:00</div>
<div style="position:absolute;left:673.1px;top:1022.3px;width:141.2px;height:17.6px;background:#ecc1a6;border-radius:4.5px;box-shadow:0 1px 2px rgba(0,0,0,0.22);"></div>
<div style="position:absolute;left:679.00px;top:1025.84px;font-size:12px;line-height:12px;color:#2b2b2b;white-space:nowrap;transform:scaleX(0.9005);transform-origin:0 0;">12:00 - 15:00</div>
<div style="position:absolute;left:824.1px;top:1022.3px;width:141.2px;height:17.6px;background:#ecc1a6;border-radius:4.5px;box-shadow:0 1px 2px rgba(0,0,0,0.22);"></div>
<div style="position:absolute;left:830.00px;top:1025.84px;font-size:12px;line-height:12px;color:#2b2b2b;white-space:nowrap;transform:scaleX(0.9118);transform-origin:0 0;">07:00 - 12:00</div>
<div style="position:absolute;left:824.1px;top:1045.7px;width:141.2px;height:17.6px;background:#cde69b;border-radius:4.5px;box-shadow:0 1px 2px rgba(0,0,0,0.22);"></div>
<div style="position:absolute;left:830.00px;top:1049.24px;font-size:12px;line-height:12px;color:#2b2b2b;white-space:nowrap;transform:scaleX(0.9005);transform-origin:0 0;">12:00 - 18:00</div>
<div style="position:absolute;left:1050.1px;top:1022.3px;width:141.2px;height:17.6px;background:#83d4a7;border-radius:4.5px;box-shadow:0 1px 2px rgba(0,0,0,0.22);"></div>
<div style="position:absolute;left:1056.00px;top:1025.84px;font-size:12px;line-height:12px;color:#2b2b2b;white-space:nowrap;transform:scaleX(0.9118);transform-origin:0 0;">07:00 - 15:30</div>
<div style="position:absolute;left:1201.1px;top:1022.3px;width:142.2px;height:17.6px;background:#b0b0b0;border-radius:4.5px;box-shadow:0 1px 2px rgba(0,0,0,0.22);"></div>
<div style="position:absolute;left:1207.00px;top:1025.84px;font-size:12px;line-height:12px;color:#2b2b2b;white-space:nowrap;transform:scaleX(0.9118);transform-origin:0 0;">09:00 - 17:30</div>
<div style="position:absolute;left:1428.1px;top:1022.3px;width:141.7px;height:17.6px;background:#c59af0;border-radius:4.5px;box-shadow:0 1px 2px rgba(0,0,0,0.22);"></div>
<div style="position:absolute;left:1434.00px;top:1025.84px;font-size:12px;line-height:12px;color:#2b2b2b;white-space:nowrap;transform:scaleX(0.9118);transform-origin:0 0;">07:00 - 12:00</div>
<div style="position:absolute;left:1907px;top:187px;width:13px;height:880px;background:#f1f1f1;"></div>
<div style="position:absolute;left:1907px;top:187px;width:13px;height:893px;background:#f5f5f5;"></div>
<div style="position:absolute;left:1908.9px;top:199.6px;width:9.3px;height:496.1px;background:#c1c1c1;"></div>
<div style="position:absolute;left:1907px;top:695.7px;width:13px;height:371.3px;background:#efefef;"></div>
<svg style="left:1909px;top:189px" width="9" height="9" viewBox="1909 189 9 9"><path d="M1910.8 195.8 L1913.6 192.4 L1916.4 195.8 Z" fill="#a3a3a3"/></svg>
<svg style="left:1909px;top:1057px" width="9" height="6" viewBox="0 0 9 6"><path d="M0.5 1 L4.5 5 L8.5 1 Z" fill="#505050"/></svg>
<div style="position:absolute;left:262.5px;top:1067px;width:1644.5px;height:13px;background:#f1f1f1;"></div>
<div style="position:absolute;left:1907px;top:1067px;width:13px;height:13px;background:#dcdcdc;"></div>
<svg style="left:266px;top:1070px" width="6" height="8" viewBox="0 0 6 8"><path d="M5 0.5 L1 4 L5 7.5 Z" fill="#a3a3a3"/></svg>
<svg style="left:1899px;top:1070px" width="6" height="8" viewBox="0 0 6 8"><path d="M1 0.5 L5 4 L1 7.5 Z" fill="#a3a3a3"/></svg>
<div style="position:absolute;left:1747.0px;top:183.1px;width:149.8px;height:359.09999999999997px;background:#04b5a0;"></div>
<svg style="left:0;top:0" width="1920" height="200" viewBox="0 0 1920 200"><path d="M1873.4 183.6 L1885 174.4 L1896.4 182.6 L1896.4 183.6 Z" fill="#04b5a0"/></svg>
<div style="position:absolute;left:1840.00px;top:202.00px;font-size:13px;line-height:13px;color:#082828;white-space:nowrap;transform:scaleX(0.9200);transform-origin:0 0;">Přehled</div>
<div style="position:absolute;left:1747.0px;top:233.89999999999998px;width:149.8px;height:1px;background:rgba(0,80,70,0.16);"></div>
<div style="position:absolute;left:1827.98px;top:253.30px;font-size:13px;line-height:13px;color:#082828;white-space:nowrap;transform:scaleX(0.9200);transform-origin:0 0;">Plánování</div>
<div style="position:absolute;left:1747.0px;top:285.2px;width:149.8px;height:1px;background:rgba(0,80,70,0.16);"></div>
<div style="position:absolute;left:1842.63px;top:304.60px;font-size:13px;line-height:13px;color:#082828;white-space:nowrap;transform:scaleX(0.9200);transform-origin:0 0;">Výkazy</div>
<div style="position:absolute;left:1747.0px;top:336.5px;width:149.8px;height:1px;background:rgba(0,80,70,0.16);"></div>
<div style="position:absolute;left:1830.61px;top:355.90px;font-size:13px;line-height:13px;color:#082828;white-space:nowrap;transform:scaleX(0.9200);transform-origin:0 0;">Dovolená</div>
<div style="position:absolute;left:1747.0px;top:387.79999999999995px;width:149.8px;height:1px;background:rgba(0,80,70,0.16);"></div>
<div style="position:absolute;left:1831.33px;top:407.20px;font-size:13px;line-height:13px;color:#082828;white-space:nowrap;transform:scaleX(0.9200);transform-origin:0 0;">Uzávěrky</div>
<div style="position:absolute;left:1747.0px;top:439.1px;width:149.8px;height:1px;background:rgba(0,80,70,0.16);"></div>
<div style="position:absolute;left:1845.32px;top:458.50px;font-size:13px;line-height:13px;color:#082828;white-space:nowrap;transform:scaleX(0.9200);transform-origin:0 0;">Svátky</div>
<div style="position:absolute;left:1747.0px;top:490.4px;width:149.8px;height:1px;background:rgba(0,80,70,0.16);"></div>
<div style="position:absolute;left:1827.32px;top:509.80px;font-size:13px;line-height:13px;color:#082828;white-space:nowrap;transform:scaleX(0.9200);transform-origin:0 0;">Nastavení</div>
<div style="position:absolute;left:456px;top:262.6px;width:411.70000000000005px;height:136.59999999999997px;background:rgba(255,197,12,0.86);border:2.4px solid #000;"></div>
<div style="position:absolute;left:582.90px;top:315.99px;font-size:32.5px;line-height:32.5px;color:#000;white-space:nowrap;transform:scaleX(0.9942);transform-origin:0 0;">Lišta Menu</div>
<div style="position:absolute;left:1280.9px;top:329.8px;width:411.89999999999986px;height:136.39999999999998px;background:rgba(255,197,12,0.86);border:2.4px solid #000;"></div>
<div style="position:absolute;left:1355.20px;top:383.29px;font-size:32.5px;line-height:32.5px;color:#000;white-space:nowrap;transform:scaleX(1.0132);transform-origin:0 0;">Tlačítko pro Menu</div>
<svg style="left:0;top:0" width="1920" height="1080" viewBox="0 0 1920 1080">
<path d="M866.5 264.5 L1047 100 M1691.5 331.5 L1872.6 167.4" stroke="#000" stroke-width="2.2" fill="none"/></svg>
</body></html>
